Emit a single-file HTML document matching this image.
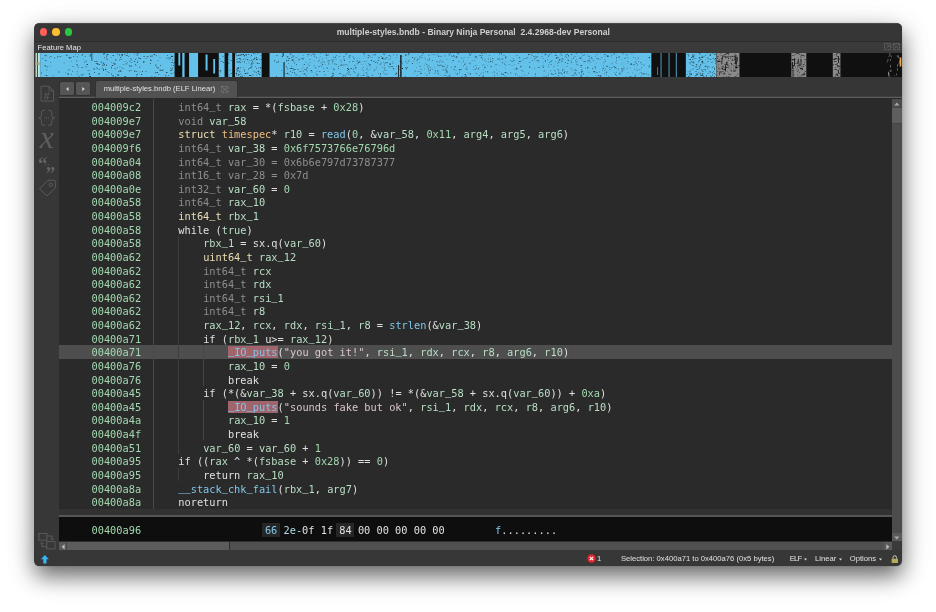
<!DOCTYPE html>
<html><head><meta charset="utf-8"><title>multiple-styles.bndb - Binary Ninja Personal</title>
<style>
html,body{margin:0;padding:0;background:#fff;}
body{width:936px;height:612px;overflow:hidden;position:relative;font-family:"Liberation Sans",sans-serif;}
.win{position:absolute;left:34px;top:23px;width:868px;height:543.2px;border-radius:5.5px;background:#373737;overflow:hidden;will-change:transform;}
.in{position:absolute;left:0.5px;top:0;width:867px;height:100%}
.shadow{position:absolute;left:34.5px;top:23px;width:867px;height:543.2px;border-radius:6px;
 box-shadow:0 0 1px rgba(0,0,0,.5),0 10px 22px rgba(0,0,0,.58),0 6px 40px rgba(0,0,0,.07);}
.titlebar{position:absolute;left:0;top:0;width:100%;height:19px;background:#363637;border-bottom:1px solid #2c2c2c;box-shadow:inset 0 1px 0 rgba(255,255,255,.1);box-sizing:border-box}
.tl{position:absolute;top:5.3px;width:7.6px;height:7.6px;border-radius:50%}
.title{position:absolute;left:302.2px;top:3.6px;font-weight:bold;font-size:8.55px;line-height:11px;color:#cfcfcf;white-space:pre}
.fmlabel{position:absolute;left:0;top:19px;width:100%;height:11px;background:#3a3a3a}
.fmlabel span{position:absolute;left:3.1px;top:0.2px;font-size:7.65px;line-height:11px;color:#e6e6e6}
.fm{position:absolute;left:0;top:29.6px;display:block}
.side{position:absolute;left:0;top:54.3px;width:24.2px;bottom:0;background:#373737}
.tabbar{position:absolute;left:24.2px;top:54px;right:0;height:22px;background:#363636;border-bottom:1px solid #272727;box-shadow:inset 0 -1px 0 #5e5e5e, inset 0 -2px 0 #404040;box-sizing:border-box}
.nav{position:absolute;top:5px;width:13.6px;height:13.4px;background:#565656;border-radius:1.5px;box-shadow:0 0 0 0.5px #2c2c2c}
.tab{position:absolute;left:37.3px;top:4px;width:141.4px;height:17px;background:#525252;border-radius:2px 2px 0 0;box-shadow:0 0 0 0.5px #2e2e2e}
.tab span{position:absolute;left:7.7px;top:3.4px;font-size:7.62px;line-height:10px;color:#e2e2e2;white-space:pre}
.code{position:absolute;left:24.2px;top:76px;width:833.3px;height:410px;background:#2a2a2a;overflow:hidden;
 font-family:"DejaVu Sans Mono","Liberation Mono",monospace;font-size:10.3px;line-height:13.63px;color:#e0e0e0}
.row{position:absolute;left:0;width:100%;height:13.63px;white-space:pre}
.hlrow{position:absolute;left:0;width:100%;height:13.63px;background:#4e4e4e}
.row i{font-style:normal;font-family:"Liberation Mono",monospace;font-size:10.33px;line-height:1px}
.addr{position:absolute;left:32.8px;top:1.4px;color:#a2d9af}
.tx{position:absolute;top:1.4px}
.d{color:#8e8e8e} .v{color:#b9dfc5} .n{color:#a2d9af} .y{color:#eddfb3} .o{color:#edbd81} .b{color:#80c6e9} .s{color:#dac4d1}
.hb{color:#80c6e9;background:#a0646c}
.vl{position:absolute;width:0.9px;background:#454545}
.sep{position:absolute;left:24.2px;top:486px;width:842.8px;height:8px;background:#323232;border-bottom:2px solid #565656;box-sizing:border-box}
.hex{position:absolute;left:24.2px;top:494px;width:833.3px;height:24px;background:#0e0e0e;font-family:"DejaVu Sans Mono","Liberation Mono",monospace;font-size:10.3px;line-height:13.63px;color:#e0e0e0;white-space:pre}
.hex span{position:absolute;top:6.7px}
.hexbox{position:absolute;top:5.6px;height:14.4px;background:#262626}
.vsb{position:absolute;left:857.5px;top:76px;width:9.5px;height:442px;background:#4c4c4c}
.vsb .thumb{position:absolute;left:0;top:8px;width:9.5px;height:17px;background:#5e5e5e;border-top:1px solid #454545;border-bottom:1px solid #454545;box-sizing:border-box}
.hsb{position:absolute;left:24.2px;top:518px;width:833.3px;height:9px;background:#505050;border-top:1px solid #2e2e2e;box-sizing:border-box}
.hsb .thumb{position:absolute;left:0;top:0;width:170.6px;height:8px;background:#5c5c5c;border-right:1px solid #2e2e2e}
.sbtn{position:absolute;background:#5a5a5a;box-sizing:border-box}
.corner{position:absolute;left:857.5px;top:518px;width:9.5px;height:9px;background:#3a3a3a}
.status{position:absolute;left:0;top:527px;width:100%;height:16px;font-size:7.65px;line-height:16px;color:#e0e0e0}
.status span{position:absolute;top:1.1px;white-space:pre}
svg{position:absolute;overflow:visible}
</style></head>
<body>
<div class="shadow"></div>
<div class="win"><div class="in">
 <div class="titlebar">
  <div class="tl" style="left:5.4px;background:#fe5f57"></div>
  <div class="tl" style="left:17.8px;background:#febc2e"></div>
  <div class="tl" style="left:30.2px;background:#28c840"></div>
  <div class="title">multiple-styles.bndb - Binary Ninja Personal  2.4.2968-dev Personal</div>
 </div>
 <div class="fmlabel"><span>Feature Map</span>
  <svg style="left:849.4px;top:0.8px" width="17" height="8" viewBox="0 0 17 8" fill="none" stroke="#7d7a73" stroke-width="0.7" stroke-dasharray="1.6 0.7">
   <rect x="0.4" y="0.6" width="6.4" height="6.2"/><path d="M2 5.4 L5.2 2.2 M3.2 2.2h2v2" />
   <rect x="9.2" y="0.6" width="6.4" height="6.2"/><path d="M9.6 1 L15.2 6.4 M15.2 1 L9.6 6.4"/>
  </svg>
 </div>
 <svg class="fm" width="867" height="24.6" viewBox="0 0 867 24.6">
<rect width="867" height="24.6" fill="#101010"/>
<rect x="5.0" y="0" width="611.4" height="24.6" fill="#64c1e9"/>
<rect x="650.9" y="0" width="30.4" height="24.6" fill="#64c1e9"/>
<rect x="0.3" y="0" width="1.6" height="24.6" fill="#b8d8c8"/>
<rect x="2.6" y="0" width="2.2" height="24.6" fill="#c9e6e0"/>
<rect x="0" y="9" width="5" height="3" fill="#b0a070" opacity="0.7"/>
<rect x="139.5" y="0" width="7.7" height="24.5" fill="#101010"/>
<rect x="149.5" y="0" width="4.5" height="24.5" fill="#101010"/>
<rect x="163.0" y="0" width="20.7" height="24.5" fill="#101010"/>
<rect x="189.5" y="0" width="3.6" height="24.5" fill="#101010"/>
<rect x="197.2" y="0" width="2.7" height="24.5" fill="#101010"/>
<rect x="226.6" y="0" width="7.9" height="24.5" fill="#101010"/>
<rect x="248.5" y="9" width="1.0" height="15.600000000000001" fill="#101010"/>
<rect x="247.7" y="0" width="0.8" height="3" fill="#101010"/>
<rect x="365.2" y="2" width="1.3" height="22.5" fill="#101010"/>
<rect x="363.0" y="12" width="0.8" height="12.5" fill="#101010"/>
<rect x="56.5" y="0" width="0.6" height="8" fill="#101010"/>
<rect x="143.3" y="0" width="1.9" height="12.5" fill="#64c1e9"/>
<rect x="170.5" y="1.5" width="2.0" height="16.0" fill="#64c1e9"/>
<rect x="178.2" y="6" width="1.8" height="14.5" fill="#64c1e9"/>
<rect x="625.7" y="0" width="0.8" height="24.5" fill="#64c1e9"/>
<rect x="633.7" y="0" width="0.8" height="24.5" fill="#64c1e9"/>
<rect x="640.9" y="0" width="0.8" height="24.5" fill="#64c1e9"/>
<rect x="622.5" y="14" width="0.6" height="8" fill="#64c1e9"/>
<path d="M24.6 3.6h1.4v0.5h-1.4zM9.8 12.6h0.8v1.0h-0.8zM8.9 12.0h0.5v0.5h-0.5zM31.1 1.6h0.5v1.0h-0.5zM30.5 19.5h0.5v0.6h-0.5zM42.7 13.8h0.5v1.0h-0.5zM40.0 1.2h0.6v0.5h-0.6zM38.3 3.1h0.8v0.6h-0.8zM37.4 13.5h1.0v0.6h-1.0zM11.6 13.5h0.6v0.8h-0.6zM11.2 16.8h1.0v0.5h-1.0zM42.0 11.7h1.0v0.8h-1.0zM51.4 11.0h0.8v0.8h-0.8zM23.2 18.7h1.4v0.6h-1.4zM10.3 7.1h0.8v0.8h-0.8zM48.5 6.8h0.5v0.5h-0.5zM35.7 3.9h0.8v0.6h-0.8zM60.6 10.0h1.4v0.5h-1.4zM50.6 13.5h0.8v0.8h-0.8zM46.5 14.0h1.0v0.8h-1.0zM9.6 2.2h0.8v0.8h-0.8zM46.6 1.5h1.4v0.8h-1.4zM43.7 23.4h0.8v0.8h-0.8zM47.8 20.9h0.8v0.5h-0.8zM61.0 8.4h1.0v0.5h-1.0zM34.6 5.1h0.8v0.6h-0.8zM49.1 9.4h0.8v0.5h-0.8zM15.3 9.5h0.8v0.6h-0.8zM53.8 20.4h0.8v0.8h-0.8zM63.7 16.1h0.8v0.6h-0.8zM14.4 4.2h0.6v0.6h-0.6zM6.2 19.6h0.6v0.8h-0.6zM22.1 3.4h1.0v0.8h-1.0zM41.5 7.5h0.6v1.0h-0.6zM61.6 15.5h1.4v0.5h-1.4zM32.4 20.6h1.4v1.0h-1.4zM28.7 9.4h0.5v0.8h-0.5zM42.9 1.5h0.5v0.6h-0.5zM31.5 2.6h1.0v0.5h-1.0zM11.5 13.4h1.0v0.5h-1.0zM61.5 14.5h0.5v0.6h-0.5zM41.7 3.5h0.8v0.8h-0.8zM41.0 11.2h0.5v0.8h-0.5zM64.1 11.0h0.8v0.8h-0.8zM10.6 2.4h0.8v0.8h-0.8zM33.7 16.3h1.0v0.5h-1.0zM17.6 22.5h0.8v0.6h-0.8zM46.2 21.6h1.0v0.8h-1.0zM63.2 20.4h1.4v0.8h-1.4zM36.1 21.4h0.8v0.6h-0.8zM36.9 18.4h0.8v0.6h-0.8zM41.7 18.6h0.6v0.6h-0.6zM53.8 17.5h0.6v0.6h-0.6zM36.0 8.4h0.5v0.5h-0.5zM52.1 11.1h0.6v1.0h-0.6zM61.9 10.6h1.4v0.8h-1.4zM61.8 8.6h0.6v0.5h-0.6zM18.9 4.6h0.6v0.8h-0.6zM42.3 21.2h0.5v0.8h-0.5zM59.1 8.1h1.4v0.5h-1.4zM54.7 2.8h0.8v0.6h-0.8zM33.7 4.2h1.4v0.8h-1.4zM10.6 22.3h1.4v0.8h-1.4zM32.8 17.5h0.5v0.6h-0.5zM15.5 3.0h0.6v1.0h-0.6zM58.9 19.0h0.6v1.0h-0.6zM54.3 23.1h1.4v0.8h-1.4zM14.7 12.9h0.5v0.5h-0.5zM52.7 17.1h0.5v1.0h-0.5zM49.7 3.3h0.6v0.6h-0.6zM7.2 5.0h1.0v0.6h-1.0zM50.6 7.7h1.0v0.8h-1.0zM54.7 1.4h1.4v0.8h-1.4zM58.5 15.6h1.0v0.8h-1.0zM54.3 20.7h0.6v1.0h-0.6z" fill="#0a0a0a" opacity="0.9"/>
<path d="M76.7 12.0h0.8v0.6h-0.8zM110.5 18.3h0.6v0.6h-0.6zM76.0 14.6h0.5v1.0h-0.5zM70.1 16.1h1.0v1.0h-1.0zM101.2 18.3h1.0v0.5h-1.0zM83.9 6.5h0.5v1.0h-0.5zM99.0 0.7h0.5v0.8h-0.5zM89.6 23.0h1.0v1.0h-1.0zM80.3 6.5h1.0v1.0h-1.0zM125.2 12.0h0.6v1.0h-0.6zM130.4 22.2h0.8v1.0h-0.8zM131.6 4.8h0.8v0.6h-0.8zM96.3 9.3h0.8v0.5h-0.8zM115.2 10.1h0.6v0.8h-0.6zM123.5 21.2h0.6v0.8h-0.6zM76.1 20.8h0.8v0.6h-0.8zM120.8 2.2h0.8v0.6h-0.8zM138.8 19.6h0.6v0.8h-0.6zM139.1 9.5h0.8v0.6h-0.8zM91.9 2.2h0.8v0.5h-0.8zM90.5 10.8h1.4v0.5h-1.4zM93.9 12.2h0.8v1.0h-0.8zM136.6 2.7h0.6v0.5h-0.6zM71.7 6.4h0.6v0.8h-0.6zM121.4 19.3h1.4v0.8h-1.4zM95.5 12.7h1.0v1.0h-1.0zM102.1 7.7h0.8v0.5h-0.8zM124.7 4.3h0.5v0.8h-0.5zM134.9 15.0h0.8v0.5h-0.8zM110.5 5.2h0.8v0.5h-0.8zM99.1 8.0h1.0v0.8h-1.0zM134.1 6.3h0.6v0.5h-0.6zM104.5 5.6h0.5v0.6h-0.5zM84.9 4.3h0.8v0.8h-0.8zM104.8 4.9h0.8v1.0h-0.8zM115.2 6.4h0.5v0.8h-0.5zM68.2 0.4h1.0v1.0h-1.0zM137.9 12.1h0.6v0.8h-0.6zM73.4 19.3h0.8v0.8h-0.8zM105.9 21.0h1.0v0.8h-1.0zM116.4 23.2h0.8v0.6h-0.8zM127.1 16.7h1.4v0.6h-1.4zM95.4 8.2h0.5v0.6h-0.5zM66.6 14.8h0.8v0.8h-0.8zM77.6 2.0h0.8v1.0h-0.8zM115.1 6.7h0.6v0.8h-0.6zM68.8 4.4h0.8v0.8h-0.8zM65.8 8.6h0.8v1.0h-0.8zM89.4 0.8h0.8v0.6h-0.8zM91.9 0.0h0.8v0.5h-0.8zM100.6 11.9h0.6v0.6h-0.6zM102.9 0.1h0.8v0.5h-0.8zM76.1 13.8h0.8v0.5h-0.8zM87.7 14.9h0.5v1.0h-0.5zM136.4 20.1h0.6v1.0h-0.6zM94.3 7.7h0.8v0.6h-0.8zM86.5 14.6h0.6v0.5h-0.6zM126.5 16.9h1.0v0.8h-1.0zM119.8 19.2h0.6v1.0h-0.6zM121.2 13.4h0.5v1.0h-0.5zM124.5 16.8h1.4v0.6h-1.4zM71.8 1.0h1.4v0.8h-1.4zM136.5 8.9h0.8v1.0h-0.8zM69.3 0.4h1.0v0.6h-1.0zM101.7 0.1h0.5v1.0h-0.5zM131.9 2.2h1.0v0.5h-1.0zM120.7 11.2h0.5v0.8h-0.5zM82.9 17.9h0.6v0.8h-0.6zM102.1 9.0h0.8v0.8h-0.8zM122.3 14.6h1.4v0.6h-1.4zM71.2 3.5h0.8v0.8h-0.8zM111.5 3.1h0.8v0.5h-0.8zM101.4 23.0h0.5v0.6h-0.5zM115.5 6.9h1.0v0.8h-1.0zM99.9 11.0h0.5v1.0h-0.5zM80.2 23.1h0.8v0.5h-0.8zM86.9 1.8h1.0v0.8h-1.0zM139.1 9.1h0.6v0.5h-0.6zM108.5 3.3h1.0v0.8h-1.0zM136.0 3.1h1.4v1.0h-1.4zM86.2 2.7h0.8v0.6h-0.8zM102.3 20.7h0.8v0.5h-0.8zM77.3 22.4h1.4v0.8h-1.4zM95.5 17.2h0.8v0.8h-0.8zM93.3 2.9h0.8v0.5h-0.8zM89.5 8.0h0.8v0.5h-0.8zM135.1 4.6h0.5v0.8h-0.5zM84.2 1.5h0.8v1.0h-0.8zM71.2 21.8h0.8v0.5h-0.8zM86.3 1.2h1.4v0.8h-1.4zM112.5 3.5h0.8v0.8h-0.8zM103.3 4.5h0.8v0.8h-0.8zM130.9 19.2h1.4v0.8h-1.4zM133.1 22.2h1.0v0.6h-1.0zM118.7 1.2h1.4v0.8h-1.4zM98.9 17.8h1.4v0.8h-1.4zM101.4 21.5h1.0v0.6h-1.0zM78.1 9.8h0.8v0.8h-0.8zM84.4 17.4h1.4v0.8h-1.4zM95.6 5.6h0.8v1.0h-0.8zM115.0 2.8h1.4v0.6h-1.4zM71.1 11.8h0.8v1.0h-0.8zM81.8 21.4h0.8v0.8h-0.8zM75.8 4.5h0.5v0.6h-0.5zM90.8 2.1h0.6v0.8h-0.6zM84.6 13.4h0.5v0.8h-0.5zM93.8 17.6h0.6v0.8h-0.6zM85.5 17.7h0.8v0.8h-0.8zM108.0 8.5h1.4v1.0h-1.4zM104.7 18.7h0.6v0.5h-0.6zM85.6 5.9h0.8v0.8h-0.8zM97.5 7.4h0.5v0.6h-0.5zM67.9 16.7h0.8v1.0h-0.8zM101.7 1.7h1.0v0.8h-1.0zM137.4 5.9h0.5v0.6h-0.5zM76.9 12.3h1.4v0.5h-1.4zM135.2 17.0h1.4v0.8h-1.4zM71.8 18.3h0.5v0.6h-0.5zM82.7 21.7h1.4v0.8h-1.4zM136.7 14.8h1.0v0.8h-1.0zM117.2 2.6h0.5v0.8h-0.5zM104.3 13.8h0.8v0.8h-0.8zM82.0 14.2h0.5v1.0h-0.5zM87.8 10.9h0.8v0.6h-0.8zM100.7 5.5h0.6v0.5h-0.6zM136.6 16.6h0.8v0.5h-0.8zM67.1 11.8h1.4v0.8h-1.4zM71.5 5.4h0.8v0.8h-0.8zM82.3 0.8h0.8v0.8h-0.8zM92.3 9.4h0.5v0.8h-0.5zM120.2 11.9h0.6v0.8h-0.6zM137.3 7.4h0.6v0.6h-0.6zM99.9 6.3h0.8v0.5h-0.8zM135.9 11.7h0.6v0.6h-0.6zM101.4 21.5h0.5v1.0h-0.5zM76.3 9.3h0.6v0.5h-0.6zM137.6 3.3h0.5v0.5h-0.5zM79.1 10.6h1.4v0.8h-1.4zM119.7 23.5h0.6v0.8h-0.6zM79.6 15.4h1.0v0.8h-1.0zM67.9 15.7h0.8v0.8h-0.8zM138.4 10.4h0.5v0.5h-0.5zM71.3 1.9h0.8v0.5h-0.8zM107.0 17.9h0.8v0.8h-0.8zM122.4 7.3h0.8v0.5h-0.8zM69.1 11.2h0.8v1.0h-0.8zM133.5 4.6h0.8v0.8h-0.8zM67.7 9.7h1.4v0.8h-1.4zM68.5 0.8h0.5v0.5h-0.5zM84.5 17.6h1.0v0.8h-1.0z" fill="#0a0a0a" opacity="0.9"/>
<path d="M185.4 7.9h1.0v0.5h-1.0zM185.0 16.9h0.8v0.8h-0.8zM185.1 17.0h1.0v0.5h-1.0zM183.8 5.5h0.8v0.8h-0.8zM188.3 9.1h0.8v0.8h-0.8zM187.6 3.1h0.8v0.6h-0.8zM183.7 22.0h0.8v0.6h-0.8zM186.6 7.7h0.8v0.8h-0.8zM185.4 18.5h0.5v1.0h-0.5zM184.6 17.8h0.6v0.8h-0.6z" fill="#0a0a0a" opacity="0.8"/>
<path d="M192.8 0.8h1.0v1.0h-1.0zM193.8 23.1h0.5v0.5h-0.5zM193.6 2.0h0.5v0.8h-0.5zM194.5 16.8h0.8v0.6h-0.8zM193.4 9.8h1.0v0.6h-1.0zM195.5 20.0h1.4v0.5h-1.4zM195.6 6.9h0.8v1.0h-0.8zM193.6 6.0h0.8v0.6h-0.8zM194.3 4.4h0.6v0.6h-0.6zM193.6 21.4h0.6v0.8h-0.6z" fill="#0a0a0a" opacity="0.8"/>
<path d="M201.6 5.9h0.6v1.0h-0.6zM213.4 15.3h0.5v0.8h-0.5zM225.4 2.4h0.8v0.6h-0.8zM221.5 21.6h0.5v0.8h-0.5zM205.9 1.2h1.0v1.0h-1.0zM204.9 1.8h1.0v0.6h-1.0zM211.4 6.1h1.4v0.5h-1.4zM202.6 14.1h1.0v0.8h-1.0zM205.5 8.7h0.6v0.5h-0.6zM205.1 6.0h1.0v0.6h-1.0zM220.8 19.3h0.8v0.8h-0.8zM204.7 7.4h0.6v0.5h-0.6zM220.3 12.9h0.5v0.8h-0.5zM202.5 9.3h1.0v0.6h-1.0zM216.3 2.2h0.6v0.8h-0.6zM217.8 9.7h0.8v0.8h-0.8zM210.6 1.2h1.4v1.0h-1.4zM222.6 9.8h0.5v0.8h-0.5zM216.5 9.2h0.8v0.6h-0.8zM224.1 10.2h0.6v0.8h-0.6zM202.8 2.1h1.0v0.8h-1.0zM211.7 3.8h0.5v0.5h-0.5zM214.1 15.1h0.8v0.5h-0.8zM214.6 21.9h1.4v1.0h-1.4zM204.3 8.2h0.6v1.0h-0.6zM204.3 1.6h0.8v0.8h-0.8zM219.3 18.7h0.6v0.8h-0.6zM203.2 22.3h0.8v0.8h-0.8zM201.3 21.9h0.8v0.5h-0.8zM223.1 14.6h0.6v0.6h-0.6zM215.9 14.5h0.6v0.8h-0.6zM204.6 5.1h0.8v1.0h-0.8zM203.9 8.5h0.6v0.6h-0.6zM224.8 19.2h0.6v0.5h-0.6zM222.6 19.9h1.4v0.5h-1.4zM217.1 7.7h0.8v1.0h-0.8zM211.6 20.0h0.8v0.8h-0.8zM207.8 5.9h0.8v0.8h-0.8zM211.4 10.3h0.5v0.5h-0.5zM215.8 11.6h0.6v0.8h-0.6zM219.5 18.4h0.8v0.6h-0.8zM220.7 9.4h0.5v0.6h-0.5zM209.1 8.6h0.8v1.0h-0.8zM213.0 1.0h1.4v0.6h-1.4zM202.0 17.3h1.4v1.0h-1.4zM202.0 17.7h0.8v0.6h-0.8zM200.6 1.6h1.0v0.5h-1.0zM204.9 23.2h0.8v0.8h-0.8zM224.5 21.6h0.6v0.6h-0.6zM201.6 8.3h0.8v0.6h-0.8zM208.2 14.5h0.8v0.6h-0.8zM206.4 22.8h0.8v0.6h-0.8zM215.1 14.5h0.6v0.8h-0.6zM209.5 4.7h0.8v0.6h-0.8zM216.3 6.6h0.8v0.8h-0.8zM204.2 18.5h0.5v1.0h-0.5zM201.1 20.3h0.8v1.0h-0.8zM213.3 16.3h0.5v0.8h-0.5zM225.4 14.9h0.8v0.8h-0.8zM206.7 23.4h1.0v0.6h-1.0zM209.2 18.0h0.8v0.6h-0.8zM204.4 17.5h0.5v0.8h-0.5zM221.0 6.0h1.4v1.0h-1.4zM223.8 21.1h1.4v0.5h-1.4zM219.1 5.2h0.8v1.0h-0.8zM216.0 9.9h0.8v0.5h-0.8zM203.3 5.4h1.4v0.5h-1.4zM200.5 0.1h0.8v0.8h-0.8zM202.6 8.4h0.6v0.8h-0.6zM214.9 13.9h0.6v0.8h-0.6zM215.9 11.2h0.6v0.5h-0.6zM224.0 5.7h0.6v0.8h-0.6zM202.4 15.1h1.4v0.8h-1.4zM210.2 6.2h0.5v0.5h-0.5zM216.5 13.3h0.8v1.0h-0.8zM216.5 10.5h1.0v0.8h-1.0zM206.3 21.3h0.5v0.5h-0.5zM213.6 9.6h0.6v0.6h-0.6zM201.4 18.4h0.5v1.0h-0.5zM214.1 22.2h0.6v0.8h-0.6zM205.0 14.4h1.0v0.8h-1.0zM220.8 4.1h0.8v0.5h-0.8zM207.6 1.1h1.4v0.8h-1.4zM218.3 0.1h0.8v0.8h-0.8zM202.0 15.5h0.6v0.6h-0.6zM225.5 6.2h1.4v0.5h-1.4zM203.1 21.0h1.4v0.8h-1.4zM218.2 6.3h1.0v0.8h-1.0zM217.5 21.6h0.8v0.8h-0.8zM216.4 22.8h0.6v0.5h-0.6zM222.5 0.4h0.8v0.6h-0.8zM221.5 4.8h0.6v0.8h-0.6zM204.8 9.2h1.0v0.6h-1.0zM209.7 20.1h1.4v1.0h-1.4zM212.0 19.8h1.4v0.5h-1.4zM221.9 10.3h1.4v0.6h-1.4zM214.6 7.3h0.6v0.8h-0.6zM215.9 1.8h0.6v0.6h-0.6zM200.7 2.6h1.0v0.6h-1.0zM208.8 3.3h0.5v0.5h-0.5zM201.0 16.3h1.4v0.5h-1.4zM217.8 17.4h0.5v1.0h-0.5zM219.5 4.7h1.0v0.5h-1.0zM222.5 17.8h1.4v0.8h-1.4zM202.7 4.9h0.5v0.5h-0.5zM200.8 20.0h1.4v0.5h-1.4zM221.1 14.9h0.8v0.8h-0.8zM202.5 2.3h1.4v0.6h-1.4zM207.5 7.9h0.8v0.5h-0.8zM208.9 22.0h0.5v0.8h-0.5zM223.3 18.2h1.0v1.0h-1.0zM212.1 6.8h1.4v0.5h-1.4zM220.2 0.7h1.0v0.5h-1.0zM208.8 16.6h1.0v1.0h-1.0zM205.5 20.3h0.5v1.0h-0.5zM221.0 4.0h0.5v1.0h-0.5zM205.1 18.0h0.5v0.5h-0.5zM208.8 2.3h1.4v0.6h-1.4zM224.8 14.0h1.0v0.8h-1.0zM214.8 3.7h0.6v0.6h-0.6z" fill="#0a0a0a" opacity="0.75"/>
<path d="M241.0 2.6h1.4v0.5h-1.4zM240.9 23.4h1.0v0.5h-1.0zM242.7 8.4h0.8v0.8h-0.8zM246.1 17.6h0.8v0.5h-0.8zM239.3 7.2h0.8v1.0h-0.8zM241.0 9.0h1.4v0.6h-1.4zM246.8 3.0h1.0v1.0h-1.0zM242.9 8.2h0.8v1.0h-0.8z" fill="#0a0a0a" opacity="0.8"/>
<path d="M251.8 19.9h1.4v1.0h-1.4zM260.6 4.0h0.8v0.8h-0.8zM258.2 3.0h0.8v0.6h-0.8zM257.1 6.3h1.4v1.0h-1.4zM251.8 3.7h0.6v0.8h-0.6zM258.5 8.2h0.6v0.8h-0.6zM263.8 6.1h1.4v0.5h-1.4zM252.0 15.5h0.6v0.8h-0.6zM251.8 3.5h0.8v0.8h-0.8zM256.0 4.6h1.4v0.5h-1.4zM253.7 20.9h0.8v0.5h-0.8zM249.7 20.2h0.8v0.6h-0.8zM257.0 14.9h0.8v0.5h-0.8zM251.6 14.2h0.8v0.5h-0.8zM260.6 21.4h0.8v1.0h-0.8zM258.3 15.3h0.6v1.0h-0.6zM262.3 16.0h1.4v0.5h-1.4zM256.3 7.4h1.4v0.5h-1.4zM262.9 5.7h0.8v0.6h-0.8zM253.3 10.0h0.8v0.5h-0.8zM258.8 9.7h1.4v0.6h-1.4zM262.9 7.7h0.5v0.8h-0.5zM262.0 21.4h0.5v0.5h-0.5zM253.3 5.1h1.4v0.6h-1.4zM257.3 2.4h1.0v0.8h-1.0zM257.6 16.9h1.0v0.5h-1.0zM259.1 19.6h1.0v0.8h-1.0zM255.7 22.4h0.6v0.6h-0.6zM255.4 18.0h0.5v1.0h-0.5zM254.8 1.3h0.8v0.8h-0.8zM255.5 0.3h0.8v0.8h-0.8zM258.9 15.9h1.0v0.8h-1.0zM251.1 7.2h0.8v1.0h-0.8zM264.1 23.5h0.8v0.8h-0.8zM252.7 3.1h0.5v0.6h-0.5zM256.5 13.3h0.6v0.6h-0.6zM254.8 15.1h0.8v0.8h-0.8zM264.4 17.9h1.4v0.6h-1.4zM261.2 11.1h0.6v0.8h-0.6zM260.1 16.2h0.8v0.6h-0.8zM256.7 19.0h0.8v0.8h-0.8zM253.2 7.1h0.8v0.8h-0.8zM255.9 15.0h1.4v0.8h-1.4zM251.8 7.2h0.8v0.5h-0.8zM250.8 13.3h0.8v0.6h-0.8z" fill="#0a0a0a" opacity="0.75"/>
<path d="M450.7 8.1h1.0v0.5h-1.0zM494.9 5.0h0.5v0.8h-0.5zM352.8 2.4h0.6v0.6h-0.6zM330.3 10.7h0.6v0.6h-0.6zM581.0 18.7h0.6v1.0h-0.6zM576.5 14.4h0.5v1.0h-0.5zM540.5 19.8h0.6v0.8h-0.6zM507.3 12.5h1.4v0.8h-1.4zM499.8 2.8h0.5v0.8h-0.5zM411.7 19.5h0.8v0.8h-0.8zM460.0 11.4h0.6v0.8h-0.6zM351.6 3.9h1.0v0.5h-1.0zM321.5 7.6h1.4v1.0h-1.4zM439.2 7.0h0.8v0.8h-0.8zM414.1 23.6h1.4v0.5h-1.4zM328.5 8.5h1.4v0.5h-1.4zM272.7 1.1h1.4v0.8h-1.4zM547.7 2.2h0.8v0.8h-0.8zM529.8 3.4h0.6v0.8h-0.6zM483.7 8.0h1.4v0.8h-1.4zM384.6 18.4h1.0v0.6h-1.0zM364.7 8.1h0.8v1.0h-0.8zM283.9 6.8h0.8v0.8h-0.8zM406.4 11.9h0.8v1.0h-0.8zM385.8 4.8h0.8v0.5h-0.8zM381.0 7.5h0.8v0.6h-0.8zM470.2 15.0h0.5v0.8h-0.5zM517.7 20.9h1.0v1.0h-1.0zM282.8 7.1h0.5v0.5h-0.5zM331.8 21.7h1.0v0.5h-1.0zM540.9 21.5h1.0v0.8h-1.0zM480.7 14.8h1.4v1.0h-1.4zM571.3 2.0h0.5v0.8h-0.5zM483.7 4.1h1.4v0.6h-1.4zM568.9 9.9h0.5v0.5h-0.5zM394.2 19.4h0.8v1.0h-0.8zM513.3 20.4h0.6v0.8h-0.6zM277.5 0.5h1.0v1.0h-1.0zM591.4 1.3h1.0v1.0h-1.0zM279.2 2.8h0.8v1.0h-0.8zM508.3 9.5h0.5v0.5h-0.5zM502.8 14.0h1.4v0.6h-1.4zM431.4 9.7h0.5v0.5h-0.5zM490.4 5.0h0.6v0.5h-0.6zM414.5 0.2h1.4v0.5h-1.4zM609.8 20.3h0.6v0.5h-0.6zM310.5 0.4h1.4v1.0h-1.4zM350.1 17.3h0.6v0.5h-0.6zM393.2 17.6h1.4v0.6h-1.4zM520.2 2.0h1.4v1.0h-1.4zM513.0 10.9h0.8v0.5h-0.8zM515.8 0.3h0.5v1.0h-0.5zM293.3 7.3h1.4v1.0h-1.4zM323.4 20.3h0.8v1.0h-0.8zM286.4 8.7h1.0v0.8h-1.0zM429.5 3.9h0.5v0.8h-0.5zM598.4 3.9h0.8v0.8h-0.8zM400.1 18.6h0.8v1.0h-0.8zM382.0 6.6h1.0v1.0h-1.0zM381.4 14.3h0.5v0.6h-0.5zM475.3 7.3h0.8v0.6h-0.8zM397.0 16.2h1.0v0.6h-1.0zM547.3 6.7h0.5v0.8h-0.5zM357.3 10.0h1.0v0.5h-1.0zM366.2 3.3h1.0v0.6h-1.0zM361.1 20.1h1.0v0.8h-1.0zM386.6 2.0h1.0v0.8h-1.0zM543.8 4.7h1.4v0.6h-1.4zM373.5 1.4h0.8v0.8h-0.8zM512.7 21.9h1.0v0.5h-1.0zM541.8 10.8h0.5v1.0h-0.5zM547.0 18.2h0.6v0.8h-0.6zM467.8 21.2h1.0v0.8h-1.0zM431.8 13.9h0.6v0.6h-0.6zM332.6 4.3h1.4v0.8h-1.4zM392.1 13.3h0.8v1.0h-0.8zM564.6 5.8h0.8v0.8h-0.8zM567.9 8.8h0.8v0.5h-0.8zM320.0 14.1h0.8v0.8h-0.8zM446.8 0.5h0.5v0.6h-0.5zM611.2 20.4h0.8v1.0h-0.8zM463.4 6.2h0.8v0.8h-0.8zM299.4 10.5h1.0v1.0h-1.0zM601.8 6.0h0.5v0.8h-0.5zM335.6 4.3h0.5v0.5h-0.5zM283.3 13.2h1.4v0.8h-1.4zM435.4 20.0h0.5v1.0h-0.5zM488.8 21.8h1.4v0.5h-1.4zM355.3 13.3h1.4v0.5h-1.4zM599.3 15.8h0.8v0.6h-0.8zM422.0 3.8h0.6v0.6h-0.6zM325.6 22.2h0.8v0.5h-0.8zM580.6 21.3h0.5v0.8h-0.5zM539.9 16.7h1.4v0.8h-1.4zM285.0 3.4h0.5v0.6h-0.5zM501.7 7.1h1.0v0.8h-1.0zM530.0 2.5h0.8v0.8h-0.8zM355.2 2.9h0.8v0.8h-0.8zM324.3 5.6h0.6v0.5h-0.6zM428.8 21.5h0.5v0.6h-0.5zM589.3 5.2h1.0v0.8h-1.0zM575.7 3.3h0.8v0.5h-0.8zM588.7 9.1h0.5v0.5h-0.5zM423.4 8.0h0.6v0.8h-0.6zM305.8 8.6h0.8v0.6h-0.8zM522.4 4.3h0.8v1.0h-0.8zM575.9 10.4h0.6v0.8h-0.6zM411.5 5.8h0.5v0.8h-0.5zM464.8 7.0h0.6v0.8h-0.6zM436.9 7.5h0.8v0.5h-0.8zM319.0 12.1h1.4v0.6h-1.4zM460.9 19.7h0.5v0.8h-0.5zM528.9 22.9h0.8v0.8h-0.8zM613.8 21.8h0.5v0.8h-0.5zM366.5 21.2h0.5v0.8h-0.5zM315.9 15.1h0.8v1.0h-0.8zM384.5 3.3h0.5v1.0h-0.5zM365.5 8.5h0.5v0.8h-0.5zM341.7 13.5h0.6v0.6h-0.6zM447.6 5.4h0.6v0.6h-0.6zM475.1 19.6h1.0v0.8h-1.0zM531.2 4.1h0.6v1.0h-0.6zM499.3 14.8h0.6v1.0h-0.6zM373.0 0.2h1.4v1.0h-1.4zM407.9 17.0h0.5v1.0h-0.5zM548.4 7.9h1.4v0.8h-1.4zM297.0 9.7h0.8v0.6h-0.8zM569.8 6.3h0.6v1.0h-0.6zM555.7 8.7h0.6v0.8h-0.6zM466.1 20.3h0.8v1.0h-0.8zM590.8 22.9h0.5v0.5h-0.5zM390.0 5.8h0.8v0.8h-0.8zM466.6 21.2h0.8v0.5h-0.8zM598.5 11.7h1.0v0.5h-1.0zM450.6 12.7h0.5v0.6h-0.5zM603.1 5.3h0.6v0.6h-0.6zM301.3 5.9h0.5v0.5h-0.5zM299.2 16.5h0.6v0.8h-0.6zM271.7 14.1h1.0v0.8h-1.0zM448.0 16.6h0.5v0.8h-0.5zM569.0 16.9h0.5v0.8h-0.5zM308.4 11.6h1.0v0.8h-1.0zM303.9 2.9h0.6v1.0h-0.6zM472.0 20.3h0.6v1.0h-0.6zM426.8 9.4h0.5v0.8h-0.5zM507.7 14.1h1.0v1.0h-1.0zM278.1 22.9h0.5v0.8h-0.5zM383.7 5.7h0.8v0.8h-0.8zM559.7 13.3h0.8v0.8h-0.8zM561.3 1.3h1.0v0.6h-1.0zM599.8 22.1h0.6v0.8h-0.6zM496.9 0.3h0.5v1.0h-0.5zM330.9 7.7h0.6v1.0h-0.6zM499.0 5.3h0.8v0.8h-0.8zM536.5 22.1h1.4v0.5h-1.4zM547.9 20.9h0.5v0.5h-0.5zM567.6 14.7h1.4v1.0h-1.4zM360.9 12.8h0.5v1.0h-0.5zM300.6 2.9h0.5v0.8h-0.5zM348.1 0.9h0.5v0.8h-0.5zM386.8 3.9h0.5v1.0h-0.5zM600.2 21.7h0.8v0.5h-0.8zM428.3 12.6h0.6v0.8h-0.6zM308.7 3.1h0.8v0.8h-0.8zM467.0 6.5h1.4v0.5h-1.4zM523.9 6.8h0.8v1.0h-0.8zM508.0 5.2h0.8v0.6h-0.8zM457.0 8.7h1.0v0.8h-1.0zM479.4 11.1h0.8v0.5h-0.8zM350.0 5.2h1.0v1.0h-1.0zM399.2 13.8h0.5v0.8h-0.5zM322.1 22.5h0.8v1.0h-0.8zM379.1 6.4h0.6v0.8h-0.6zM285.4 0.5h1.0v0.5h-1.0zM477.0 8.2h1.4v0.5h-1.4zM445.9 19.7h0.8v0.5h-0.8zM447.3 23.3h1.4v0.6h-1.4zM410.9 15.8h0.6v0.6h-0.6zM480.6 20.1h1.0v0.5h-1.0zM523.3 17.5h0.8v0.8h-0.8zM539.4 16.7h1.4v0.6h-1.4zM409.6 2.4h0.8v1.0h-0.8zM470.0 11.8h1.0v0.6h-1.0zM411.4 18.5h1.0v1.0h-1.0zM304.2 20.1h1.4v0.8h-1.4zM366.0 8.3h0.8v0.8h-0.8zM449.1 14.1h1.4v0.8h-1.4zM267.9 17.6h0.8v0.8h-0.8zM420.5 4.3h0.8v0.6h-0.8zM417.5 8.9h0.6v0.5h-0.6zM552.3 7.8h1.0v0.6h-1.0zM600.1 4.8h0.8v0.5h-0.8zM274.4 6.1h0.8v0.8h-0.8zM586.7 18.3h1.0v1.0h-1.0zM613.9 12.2h1.0v0.8h-1.0zM401.4 8.4h1.0v0.8h-1.0zM423.6 0.2h0.5v1.0h-0.5zM345.5 9.7h1.0v0.8h-1.0zM491.8 21.9h0.6v0.6h-0.6zM602.1 11.5h0.8v1.0h-0.8zM579.3 13.9h1.4v1.0h-1.4zM526.0 2.2h0.8v0.8h-0.8zM393.5 1.8h0.8v1.0h-0.8zM326.8 15.5h0.8v0.8h-0.8zM551.9 23.4h0.8v0.6h-0.8zM448.4 19.3h0.6v1.0h-0.6zM577.2 9.7h0.5v1.0h-0.5zM476.0 8.3h1.4v0.5h-1.4zM506.9 0.3h0.5v0.8h-0.5zM513.5 13.0h0.8v0.8h-0.8zM559.4 13.8h1.4v0.5h-1.4zM334.1 11.7h1.0v1.0h-1.0zM358.3 15.3h1.0v1.0h-1.0zM613.5 13.6h0.8v1.0h-0.8zM307.9 3.7h1.0v0.5h-1.0zM275.6 1.8h1.0v0.8h-1.0zM552.8 14.5h0.5v0.5h-0.5zM504.4 13.7h0.6v0.6h-0.6zM389.0 4.0h0.8v0.5h-0.8zM565.4 22.4h0.5v0.8h-0.5zM332.4 14.7h0.5v0.5h-0.5zM342.3 9.3h0.5v0.8h-0.5zM284.5 5.6h0.6v0.5h-0.6zM321.1 13.9h0.6v0.8h-0.6zM267.7 20.5h0.8v0.8h-0.8zM411.5 5.9h0.8v0.5h-0.8zM350.3 9.2h1.4v1.0h-1.4zM342.8 7.3h1.4v0.8h-1.4zM273.3 20.5h0.5v0.6h-0.5zM324.8 8.9h0.5v0.8h-0.5zM403.7 8.6h0.8v1.0h-0.8zM569.6 7.9h1.4v0.5h-1.4zM601.0 10.0h0.8v1.0h-0.8zM351.0 4.5h0.8v0.8h-0.8zM348.3 0.8h1.4v0.5h-1.4zM384.7 3.7h1.4v0.6h-1.4zM297.8 6.4h0.6v1.0h-0.6zM420.2 19.7h0.6v0.6h-0.6zM393.9 5.1h0.8v0.8h-0.8zM485.1 13.7h0.8v0.8h-0.8zM441.7 5.4h0.8v0.6h-0.8zM594.3 23.6h1.0v0.8h-1.0zM470.6 8.7h0.6v0.8h-0.6zM477.8 5.0h0.5v1.0h-0.5zM297.4 20.1h1.4v0.8h-1.4zM275.5 17.0h0.6v0.8h-0.6zM270.7 16.8h1.4v0.6h-1.4zM536.4 5.5h0.6v0.5h-0.6zM289.3 21.6h1.0v0.8h-1.0zM332.8 17.0h0.5v0.6h-0.5zM366.2 19.3h0.8v0.8h-0.8zM389.7 19.9h0.8v0.6h-0.8zM592.4 4.2h0.8v0.8h-0.8zM578.5 0.6h1.4v0.8h-1.4zM352.2 20.0h0.8v0.5h-0.8zM328.9 2.7h1.0v0.6h-1.0zM514.2 1.0h0.5v1.0h-0.5zM322.0 4.7h0.8v0.6h-0.8zM398.4 0.9h0.8v0.6h-0.8zM462.5 5.4h0.8v1.0h-0.8zM354.4 10.3h1.4v1.0h-1.4zM387.3 0.0h1.4v0.8h-1.4zM580.0 20.7h1.0v1.0h-1.0zM508.4 23.0h1.4v0.5h-1.4zM278.5 7.5h0.8v0.5h-0.8zM411.1 17.6h1.4v1.0h-1.4zM554.7 6.6h0.5v0.8h-0.5zM595.8 10.0h0.8v1.0h-0.8zM523.3 19.6h1.4v0.8h-1.4zM443.0 16.0h0.6v0.8h-0.6zM500.4 20.0h0.6v0.8h-0.6zM531.4 1.0h1.4v1.0h-1.4zM356.7 12.9h1.4v0.6h-1.4zM455.3 5.9h0.5v0.6h-0.5zM390.4 9.7h0.6v0.8h-0.6zM313.4 16.2h0.8v0.8h-0.8zM348.5 5.7h1.0v0.8h-1.0zM312.0 15.1h1.4v0.8h-1.4zM312.1 16.7h1.0v1.0h-1.0zM349.5 14.9h0.5v1.0h-0.5zM413.7 22.2h1.4v0.6h-1.4zM474.4 10.9h0.8v0.6h-0.8zM305.5 6.8h0.8v0.8h-0.8zM337.5 1.4h0.8v0.8h-0.8zM334.3 16.6h0.8v0.5h-0.8zM321.8 10.5h1.0v0.8h-1.0zM366.5 13.2h0.5v0.5h-0.5zM429.0 23.1h0.8v0.5h-0.8zM526.3 7.8h1.4v1.0h-1.4zM357.8 15.2h0.8v0.8h-0.8zM331.7 12.8h0.5v0.8h-0.5zM586.4 15.2h1.4v1.0h-1.4zM591.9 15.4h0.8v0.6h-0.8zM292.8 17.6h0.5v0.8h-0.5zM558.5 7.0h0.6v1.0h-0.6zM560.7 21.9h0.6v0.5h-0.6zM539.3 19.6h1.4v1.0h-1.4zM379.5 4.4h0.8v0.8h-0.8zM345.8 3.2h0.8v0.8h-0.8zM349.0 1.0h1.0v0.8h-1.0zM581.4 22.3h0.8v0.8h-0.8zM439.8 3.7h0.8v1.0h-0.8zM468.3 1.9h1.4v0.6h-1.4zM322.6 10.5h0.8v0.5h-0.8zM607.2 20.1h0.8v0.6h-0.8zM341.7 8.8h0.5v1.0h-0.5zM564.0 18.6h0.8v0.6h-0.8zM364.4 15.6h1.0v0.8h-1.0zM576.3 1.5h0.5v0.6h-0.5zM581.0 3.9h0.8v0.5h-0.8zM420.2 13.3h0.8v1.0h-0.8zM333.7 2.0h0.8v1.0h-0.8zM426.2 22.9h1.4v0.6h-1.4zM605.6 22.7h1.0v0.5h-1.0zM548.6 1.4h1.4v0.8h-1.4zM478.1 7.0h1.0v0.8h-1.0zM598.0 11.3h1.4v0.6h-1.4zM370.0 8.1h1.4v0.5h-1.4zM561.5 5.3h1.4v0.8h-1.4zM506.8 3.5h1.0v0.8h-1.0zM459.2 22.3h0.8v1.0h-0.8zM349.3 10.4h0.8v0.5h-0.8zM344.8 22.9h0.6v1.0h-0.6zM527.2 5.2h0.8v0.5h-0.8zM331.0 15.8h1.4v0.8h-1.4zM344.7 10.8h1.0v1.0h-1.0zM508.7 17.4h1.0v1.0h-1.0zM293.5 9.6h0.5v0.8h-0.5zM312.4 11.9h1.0v0.5h-1.0zM484.2 22.7h1.0v0.5h-1.0zM426.0 16.2h1.0v0.6h-1.0zM603.3 4.5h0.8v0.5h-0.8zM313.2 18.3h0.5v0.8h-0.5zM348.2 8.8h0.5v1.0h-0.5zM599.0 10.8h0.5v0.6h-0.5zM414.2 21.0h1.0v0.6h-1.0zM462.0 21.7h0.8v0.6h-0.8zM393.6 19.9h1.4v0.5h-1.4zM553.6 2.9h0.8v1.0h-0.8zM522.8 22.4h1.4v0.8h-1.4zM280.7 14.2h0.5v0.8h-0.5zM457.0 19.0h0.5v0.5h-0.5zM588.4 15.9h0.8v0.8h-0.8zM332.9 10.5h1.0v0.8h-1.0zM305.1 0.5h0.5v0.5h-0.5zM544.9 4.4h1.0v0.8h-1.0zM570.4 15.8h0.6v1.0h-0.6zM571.0 12.7h1.4v0.8h-1.4zM596.6 0.3h0.8v0.6h-0.8zM435.5 11.4h0.5v0.5h-0.5zM291.5 14.6h1.4v1.0h-1.4zM402.5 11.2h0.6v0.8h-0.6zM402.8 20.6h1.0v1.0h-1.0zM292.0 7.8h0.6v0.8h-0.6zM577.5 13.9h0.5v0.6h-0.5zM324.7 8.5h0.8v0.8h-0.8zM466.9 9.2h0.8v0.8h-0.8zM267.6 13.7h0.8v0.6h-0.8zM272.7 10.8h1.0v0.5h-1.0zM485.7 17.2h0.6v0.8h-0.6zM399.7 1.5h0.8v0.8h-0.8zM464.1 12.5h0.6v0.5h-0.6zM584.9 21.3h0.5v0.6h-0.5zM535.7 14.9h1.4v0.5h-1.4zM392.2 6.6h0.6v0.6h-0.6zM503.3 7.2h0.8v0.8h-0.8zM443.1 15.0h0.8v1.0h-0.8zM515.3 7.9h1.4v0.8h-1.4zM499.9 20.9h0.8v1.0h-0.8zM393.7 5.7h0.6v0.8h-0.6zM318.1 4.8h1.4v0.8h-1.4zM406.8 9.3h0.8v0.6h-0.8zM470.3 3.4h1.4v0.8h-1.4zM353.5 13.5h1.4v0.8h-1.4zM291.2 4.5h0.5v1.0h-0.5zM327.9 13.7h0.8v0.8h-0.8zM604.2 16.3h1.4v0.5h-1.4zM558.2 7.5h0.6v0.8h-0.6zM578.8 12.9h0.6v0.8h-0.6zM348.2 0.5h0.5v0.8h-0.5zM421.8 21.1h0.8v1.0h-0.8zM491.7 4.6h1.4v0.5h-1.4zM601.6 14.2h0.5v0.5h-0.5zM548.0 20.7h0.8v0.6h-0.8zM267.3 6.4h1.4v0.5h-1.4zM488.8 21.8h0.6v0.8h-0.6zM379.5 17.7h1.4v0.8h-1.4zM407.0 16.0h0.8v0.6h-0.8zM285.5 9.8h0.5v0.5h-0.5zM484.1 7.9h0.8v1.0h-0.8zM404.9 22.2h0.5v0.5h-0.5zM588.4 13.3h0.8v0.5h-0.8zM410.4 16.8h0.8v0.6h-0.8zM298.1 3.7h0.6v1.0h-0.6zM533.2 2.1h0.8v0.8h-0.8zM385.6 16.1h1.0v0.6h-1.0zM494.9 14.2h0.8v0.6h-0.8zM524.1 6.1h1.4v0.8h-1.4zM531.9 18.3h0.8v1.0h-0.8zM606.6 10.7h0.8v0.8h-0.8zM448.1 22.2h0.6v0.8h-0.6zM268.7 11.2h1.4v0.8h-1.4zM318.1 14.8h0.8v0.5h-0.8zM592.5 14.7h0.5v0.5h-0.5zM455.1 4.8h0.6v0.8h-0.6zM593.5 8.6h0.6v0.6h-0.6zM569.4 20.2h0.6v1.0h-0.6zM275.6 18.4h0.6v0.8h-0.6zM608.3 11.8h1.4v0.8h-1.4zM580.0 9.2h0.6v0.8h-0.6zM541.1 0.6h1.4v0.5h-1.4zM288.3 15.2h0.8v0.8h-0.8zM286.4 13.3h0.8v0.8h-0.8zM595.3 14.8h0.6v0.5h-0.6zM353.4 6.2h0.8v0.6h-0.8zM346.3 4.8h0.8v0.8h-0.8zM369.7 23.5h0.6v1.0h-0.6zM541.5 11.3h0.8v0.6h-0.8zM552.7 6.7h0.8v0.5h-0.8zM435.0 21.0h0.6v0.8h-0.6zM503.8 14.1h0.8v0.6h-0.8zM467.6 20.8h0.6v0.8h-0.6zM281.6 18.3h0.8v0.6h-0.8zM417.2 3.3h0.8v0.5h-0.8zM546.5 3.6h0.5v0.6h-0.5zM583.7 3.6h1.4v0.8h-1.4zM299.5 4.0h1.4v0.8h-1.4zM297.0 8.0h1.4v0.8h-1.4zM573.3 23.1h0.5v1.0h-0.5zM347.4 18.7h1.4v0.5h-1.4zM278.7 11.9h0.6v1.0h-0.6zM415.7 2.5h0.5v0.5h-0.5zM611.3 7.5h0.5v0.5h-0.5zM599.6 22.9h1.0v0.8h-1.0zM266.4 5.3h1.0v0.6h-1.0zM486.5 12.9h0.5v1.0h-0.5zM388.9 11.7h0.5v0.8h-0.5zM604.2 20.1h0.6v0.5h-0.6zM360.8 4.2h0.8v0.8h-0.8zM289.6 1.0h1.0v0.5h-1.0zM407.9 13.1h0.8v0.8h-0.8zM269.2 16.2h1.4v0.8h-1.4zM455.3 13.0h1.4v0.8h-1.4zM608.3 20.6h1.4v0.8h-1.4zM404.8 7.5h0.8v0.8h-0.8zM605.1 9.1h0.8v0.8h-0.8zM546.0 21.2h1.4v0.5h-1.4zM348.9 11.8h0.8v1.0h-0.8zM520.3 23.4h0.6v0.5h-0.6zM295.8 14.7h0.5v0.5h-0.5zM407.1 13.2h1.4v0.8h-1.4zM457.1 7.4h1.0v0.5h-1.0zM430.7 15.3h0.8v1.0h-0.8zM385.0 12.9h0.8v0.6h-0.8zM553.4 18.7h0.8v0.8h-0.8zM514.0 9.3h1.0v0.8h-1.0zM479.4 16.0h0.8v0.5h-0.8zM485.0 12.8h0.6v1.0h-0.6zM532.6 6.2h0.8v0.8h-0.8zM447.7 11.2h0.6v0.6h-0.6zM288.5 17.9h0.8v1.0h-0.8zM337.0 4.0h0.8v0.6h-0.8zM500.6 3.6h1.4v0.8h-1.4zM327.5 22.4h1.4v0.5h-1.4zM377.9 8.5h0.8v0.5h-0.8zM408.6 16.6h0.8v0.5h-0.8zM392.8 15.6h1.0v1.0h-1.0zM371.0 15.6h0.8v0.8h-0.8zM366.9 10.5h0.5v0.8h-0.5zM487.0 17.2h0.6v1.0h-0.6zM317.8 16.1h0.8v0.8h-0.8zM447.2 5.6h0.8v1.0h-0.8zM384.2 9.0h0.5v1.0h-0.5zM335.6 13.5h0.5v1.0h-0.5zM327.8 16.9h0.8v0.8h-0.8zM354.7 6.3h0.8v0.5h-0.8zM448.8 11.6h0.5v0.6h-0.5zM310.3 22.6h0.8v1.0h-0.8zM538.1 21.7h1.4v0.8h-1.4zM396.6 1.0h0.8v0.8h-0.8zM415.9 14.3h0.8v0.8h-0.8zM348.8 20.1h0.6v1.0h-0.6zM332.4 22.9h1.4v1.0h-1.4zM395.5 15.7h0.8v0.5h-0.8zM293.4 10.5h0.8v1.0h-0.8zM410.2 22.1h1.4v0.5h-1.4zM303.1 13.3h0.8v0.8h-0.8zM410.3 11.2h0.5v0.8h-0.5zM404.3 3.2h0.5v0.6h-0.5zM523.9 9.5h0.5v0.8h-0.5zM458.8 18.2h0.8v0.5h-0.8zM296.9 20.0h1.0v0.5h-1.0zM301.0 2.1h0.6v1.0h-0.6zM424.0 19.4h0.6v0.8h-0.6zM434.0 1.3h1.4v0.8h-1.4zM559.9 3.3h0.8v0.5h-0.8zM569.8 3.4h0.8v0.6h-0.8zM446.4 0.1h1.0v0.8h-1.0zM447.0 2.0h0.8v0.8h-0.8zM497.2 7.1h0.8v1.0h-0.8zM574.6 16.1h0.8v0.8h-0.8zM352.2 9.0h0.8v1.0h-0.8zM355.2 4.8h0.5v0.6h-0.5zM452.9 8.8h0.8v0.8h-0.8zM513.2 3.3h0.8v0.6h-0.8zM424.8 16.7h1.4v0.5h-1.4zM520.0 0.2h0.5v0.8h-0.5zM597.5 19.4h0.5v0.8h-0.5zM342.2 10.4h0.6v0.6h-0.6zM545.6 14.0h0.8v0.8h-0.8zM591.8 10.5h0.6v0.5h-0.6zM328.4 20.3h0.5v0.5h-0.5zM313.3 20.8h1.0v0.8h-1.0zM328.4 21.8h1.0v0.6h-1.0zM439.4 15.9h1.4v0.8h-1.4zM545.4 12.6h0.6v0.6h-0.6zM536.9 16.9h1.0v0.5h-1.0zM428.0 4.8h0.5v0.5h-0.5zM410.2 15.5h0.8v0.8h-0.8zM504.9 3.7h0.5v0.6h-0.5zM280.1 19.7h0.8v0.6h-0.8zM570.8 18.8h1.4v1.0h-1.4zM516.6 7.3h0.8v0.8h-0.8zM457.0 5.1h1.4v0.6h-1.4zM402.1 0.8h0.8v0.6h-0.8zM489.1 5.3h1.0v0.5h-1.0zM334.7 3.5h0.6v0.8h-0.6zM381.8 9.5h0.5v0.8h-0.5zM308.1 21.8h1.4v1.0h-1.4zM449.2 6.9h0.8v0.5h-0.8zM527.4 11.7h0.5v0.6h-0.5zM434.7 20.4h1.0v1.0h-1.0zM454.2 2.1h0.6v0.8h-0.6zM360.1 21.1h0.6v1.0h-0.6zM588.2 0.8h1.0v0.5h-1.0zM603.1 8.1h0.6v0.8h-0.6zM283.0 7.9h0.8v0.8h-0.8zM351.8 17.5h0.6v0.5h-0.6zM540.4 7.0h0.5v1.0h-0.5zM424.3 17.6h0.5v0.6h-0.5zM473.4 10.9h0.5v0.5h-0.5zM444.7 2.3h1.4v0.6h-1.4zM410.4 19.8h0.5v0.8h-0.5zM519.4 17.3h0.8v0.6h-0.8zM496.8 2.1h0.5v0.8h-0.5zM371.4 6.2h0.5v0.6h-0.5zM306.4 11.7h1.0v1.0h-1.0zM306.5 11.0h0.6v1.0h-0.6zM452.4 12.0h0.8v0.6h-0.8zM364.4 13.1h0.6v0.6h-0.6zM519.1 12.6h0.6v0.5h-0.6zM270.8 22.3h0.8v1.0h-0.8zM339.1 17.6h0.5v0.6h-0.5zM319.1 6.2h0.5v0.8h-0.5zM402.8 12.2h0.8v1.0h-0.8zM576.3 2.0h1.0v0.6h-1.0zM347.1 14.0h1.0v0.5h-1.0zM552.2 1.7h0.8v0.5h-0.8zM279.9 14.6h1.4v0.6h-1.4zM549.8 8.1h0.8v1.0h-0.8zM586.9 0.3h0.8v0.8h-0.8zM276.8 18.6h0.6v1.0h-0.6zM502.4 3.6h0.8v0.6h-0.8zM336.6 21.8h1.4v0.8h-1.4zM512.8 1.6h0.5v0.8h-0.5zM278.7 12.4h0.8v0.5h-0.8zM527.8 15.0h0.6v0.5h-0.6zM560.7 18.6h0.5v0.8h-0.5zM468.9 19.0h0.8v0.8h-0.8zM312.6 19.6h0.8v0.5h-0.8zM525.5 19.6h1.4v1.0h-1.4zM323.0 9.1h1.4v1.0h-1.4zM369.8 22.7h1.0v0.5h-1.0zM289.2 18.5h0.8v0.6h-0.8zM349.3 13.9h1.0v0.6h-1.0zM571.8 13.6h1.4v0.5h-1.4zM402.3 18.5h1.4v0.8h-1.4zM553.7 9.6h0.5v0.6h-0.5zM493.2 19.7h0.8v1.0h-0.8zM581.0 10.1h0.8v0.5h-0.8zM370.4 14.3h0.5v0.8h-0.5zM411.6 14.3h0.8v0.6h-0.8zM382.6 5.0h0.8v0.8h-0.8zM560.2 14.6h0.8v0.8h-0.8zM296.2 6.4h1.4v0.8h-1.4zM407.7 12.7h0.6v0.5h-0.6zM341.0 14.8h0.8v0.6h-0.8zM401.5 7.9h0.6v0.8h-0.6zM323.9 8.3h1.0v0.8h-1.0zM373.2 7.5h1.0v1.0h-1.0zM331.6 19.6h0.6v0.8h-0.6zM449.5 0.0h0.6v0.5h-0.6zM595.3 10.7h1.4v0.8h-1.4zM522.6 16.0h1.0v1.0h-1.0zM498.0 3.2h0.8v0.8h-0.8zM292.0 14.7h0.8v0.8h-0.8zM599.8 8.5h1.4v0.8h-1.4zM592.8 19.1h0.5v0.8h-0.5zM437.7 16.3h0.5v0.5h-0.5zM571.0 21.0h0.5v1.0h-0.5zM397.1 7.3h1.0v0.6h-1.0zM519.9 17.7h0.5v0.8h-0.5zM433.9 0.2h0.8v0.6h-0.8zM331.0 21.7h1.0v0.5h-1.0zM613.7 4.1h1.0v0.8h-1.0zM484.4 5.7h1.0v0.5h-1.0zM412.3 23.1h1.4v0.5h-1.4zM546.4 16.0h0.8v0.8h-0.8zM601.6 16.7h1.4v0.8h-1.4zM378.6 19.7h0.8v0.5h-0.8zM542.5 8.2h0.6v0.6h-0.6zM445.6 20.7h0.6v0.8h-0.6zM523.2 4.0h0.8v0.5h-0.8zM470.5 22.9h0.8v0.6h-0.8zM360.5 21.0h0.8v0.6h-0.8zM482.1 21.9h0.8v0.5h-0.8zM503.4 8.5h0.8v0.8h-0.8zM542.4 11.2h0.5v0.6h-0.5zM588.6 14.7h1.0v0.8h-1.0zM487.9 18.4h0.8v0.5h-0.8zM318.6 17.9h0.8v1.0h-0.8zM561.5 9.7h0.5v0.8h-0.5zM402.2 16.9h0.8v1.0h-0.8zM548.5 20.1h0.5v0.8h-0.5zM422.4 0.3h1.0v1.0h-1.0zM372.1 14.2h0.8v0.8h-0.8zM607.7 20.9h1.0v0.5h-1.0zM528.6 16.0h0.8v0.5h-0.8zM590.1 3.9h0.6v0.5h-0.6zM535.8 9.3h1.4v0.8h-1.4zM405.1 11.8h0.8v0.8h-0.8zM567.4 16.8h0.6v1.0h-0.6zM522.2 9.8h0.8v0.6h-0.8zM339.9 16.1h0.8v0.5h-0.8zM440.7 20.1h1.4v0.6h-1.4zM467.2 9.5h1.0v0.8h-1.0zM539.5 16.0h0.6v0.6h-0.6zM343.0 20.1h0.6v1.0h-0.6zM309.1 6.7h0.5v0.8h-0.5zM572.2 3.1h1.4v0.8h-1.4zM479.2 6.5h0.5v1.0h-0.5zM476.6 12.0h1.0v0.6h-1.0zM581.0 7.3h0.8v1.0h-0.8zM605.7 18.9h0.8v0.5h-0.8zM509.6 1.7h0.8v0.6h-0.8zM266.7 14.9h0.6v0.8h-0.6zM361.5 1.4h0.8v1.0h-0.8zM459.2 19.1h0.5v1.0h-0.5zM554.3 2.6h0.6v0.8h-0.6zM485.2 8.0h0.8v1.0h-0.8zM463.9 5.1h0.6v0.8h-0.6zM558.5 19.1h1.0v0.5h-1.0zM343.3 4.1h1.0v0.8h-1.0zM413.4 1.5h1.4v0.8h-1.4zM518.4 13.8h0.8v0.8h-0.8zM444.2 13.9h0.6v0.5h-0.6zM546.2 22.7h0.8v0.8h-0.8zM290.4 11.3h0.6v0.8h-0.6zM423.9 16.1h1.4v1.0h-1.4zM424.2 8.1h0.6v0.5h-0.6zM406.1 6.7h0.6v0.5h-0.6zM522.4 12.2h0.8v0.6h-0.8zM541.3 17.5h0.8v0.6h-0.8zM461.0 16.5h0.8v0.5h-0.8zM586.6 17.1h1.4v0.5h-1.4zM287.4 4.9h0.5v1.0h-0.5zM357.6 8.4h0.6v1.0h-0.6zM486.1 23.4h0.8v0.5h-0.8zM280.9 4.1h0.8v0.8h-0.8zM579.2 19.0h0.8v0.5h-0.8zM385.2 20.3h0.8v0.8h-0.8zM435.1 2.0h0.8v0.8h-0.8zM431.7 19.4h0.6v0.5h-0.6zM449.9 5.9h0.8v0.6h-0.8zM389.0 15.5h0.6v0.8h-0.6zM595.4 23.1h0.8v0.8h-0.8zM321.7 21.2h0.8v0.6h-0.8zM313.8 2.6h1.4v1.0h-1.4zM450.9 0.7h0.5v0.8h-0.5zM537.8 4.8h1.0v1.0h-1.0zM584.4 20.3h0.8v1.0h-0.8zM460.8 10.9h1.4v0.6h-1.4zM268.1 4.8h0.8v0.8h-0.8zM572.8 2.3h0.6v0.6h-0.6zM419.1 13.5h1.4v0.8h-1.4zM531.3 13.5h1.4v0.5h-1.4zM566.2 4.0h1.4v0.6h-1.4zM515.7 11.1h0.8v1.0h-0.8zM315.0 21.5h1.0v0.8h-1.0zM287.4 5.6h0.6v0.5h-0.6zM402.4 18.6h0.6v0.5h-0.6zM350.2 21.4h0.6v0.5h-0.6zM278.8 1.1h0.6v0.6h-0.6zM536.1 1.0h1.0v1.0h-1.0zM586.3 6.2h0.6v0.8h-0.6zM271.9 17.9h0.5v0.5h-0.5zM330.7 19.0h0.6v1.0h-0.6zM444.2 2.5h0.8v0.5h-0.8zM290.7 0.7h1.4v0.5h-1.4zM440.9 14.6h1.0v1.0h-1.0zM292.6 1.3h1.0v1.0h-1.0zM367.0 9.4h0.5v1.0h-0.5zM525.5 0.6h1.0v0.8h-1.0zM338.4 16.7h1.4v0.6h-1.4zM499.9 23.2h1.0v0.5h-1.0zM456.1 8.3h0.5v0.5h-0.5zM520.3 20.1h0.5v0.5h-0.5zM393.8 7.1h0.8v0.6h-0.8zM438.0 13.6h0.8v0.6h-0.8zM267.9 1.8h0.5v1.0h-0.5zM340.1 9.1h0.8v1.0h-0.8zM466.0 5.0h1.4v0.5h-1.4zM584.1 19.8h1.4v0.5h-1.4zM499.4 3.2h0.8v0.5h-0.8zM328.3 22.2h0.8v0.8h-0.8zM512.1 6.0h0.8v0.8h-0.8zM275.4 9.0h0.6v0.8h-0.6zM322.4 22.3h1.4v0.8h-1.4zM531.6 19.7h0.8v0.8h-0.8zM546.0 0.3h1.0v0.5h-1.0zM384.4 12.8h0.8v0.8h-0.8zM266.1 18.2h0.6v0.8h-0.6zM542.8 12.6h0.5v0.5h-0.5zM553.6 7.4h1.4v0.8h-1.4zM393.6 12.7h0.8v0.6h-0.8zM339.3 1.3h1.4v1.0h-1.4zM351.0 21.6h1.0v0.5h-1.0zM491.6 5.1h0.5v0.8h-0.5zM416.1 2.8h0.6v1.0h-0.6zM418.4 16.2h1.4v0.8h-1.4zM528.3 5.9h0.8v0.5h-0.8zM297.5 20.4h1.4v0.8h-1.4zM481.3 15.5h1.4v1.0h-1.4zM315.1 1.6h0.5v0.8h-0.5zM371.6 1.5h0.5v1.0h-0.5zM270.6 8.5h0.6v1.0h-0.6zM304.9 11.7h1.0v0.8h-1.0zM586.8 10.6h0.5v0.8h-0.5zM371.3 9.7h1.4v0.6h-1.4zM420.8 17.2h0.5v0.8h-0.5zM385.0 19.6h0.5v0.8h-0.5zM554.7 5.3h0.6v0.8h-0.6zM499.6 6.6h0.5v0.6h-0.5zM290.9 2.1h1.4v1.0h-1.4zM374.4 6.2h0.5v0.6h-0.5zM433.5 19.8h0.5v0.8h-0.5zM354.1 2.1h1.0v0.6h-1.0zM287.2 7.0h0.8v0.6h-0.8zM592.2 8.4h1.0v0.6h-1.0zM313.8 18.6h0.8v0.8h-0.8zM393.3 12.3h0.5v0.6h-0.5zM582.8 3.9h0.8v0.5h-0.8zM343.7 4.6h0.6v0.8h-0.6zM563.2 5.7h0.8v0.8h-0.8zM569.0 1.2h1.4v0.8h-1.4zM557.4 5.5h0.5v0.8h-0.5zM418.5 2.7h0.8v1.0h-0.8zM513.8 2.2h0.5v0.8h-0.5zM432.9 4.1h0.6v0.8h-0.6zM419.2 2.8h0.5v0.8h-0.5zM391.5 11.1h0.8v1.0h-0.8zM285.5 12.0h0.8v0.6h-0.8zM461.9 20.5h0.8v0.5h-0.8zM286.4 10.2h0.5v0.6h-0.5zM447.5 12.0h0.8v0.6h-0.8zM300.9 11.3h0.8v0.8h-0.8zM539.5 3.1h0.8v0.8h-0.8zM299.7 6.6h0.8v0.5h-0.8zM307.3 23.2h0.8v0.8h-0.8zM328.3 0.3h1.4v1.0h-1.4zM580.5 15.2h1.4v0.5h-1.4zM453.0 5.5h0.8v1.0h-0.8zM314.1 8.6h0.8v0.8h-0.8zM523.9 20.2h0.8v0.6h-0.8zM509.7 0.4h0.8v0.5h-0.8zM422.3 20.1h0.8v0.8h-0.8zM605.9 19.8h0.8v0.8h-0.8zM469.1 22.2h0.8v0.5h-0.8zM502.5 0.3h0.8v0.6h-0.8zM288.5 8.8h1.4v0.8h-1.4zM500.2 5.0h0.6v0.6h-0.6zM556.5 4.8h0.8v0.8h-0.8zM344.5 22.7h0.8v0.5h-0.8zM407.5 8.1h1.4v0.5h-1.4zM463.9 18.2h0.6v0.5h-0.6zM319.5 19.2h1.0v0.8h-1.0zM431.3 12.9h0.8v0.6h-0.8zM356.6 13.3h0.8v0.8h-0.8zM317.6 3.2h1.0v0.6h-1.0zM468.4 20.9h0.5v0.6h-0.5zM347.3 4.0h1.0v0.8h-1.0zM541.2 6.0h1.0v0.6h-1.0zM565.7 22.6h0.8v0.8h-0.8zM298.6 10.3h0.5v0.5h-0.5zM581.0 1.7h0.6v0.6h-0.6zM412.1 12.5h0.8v1.0h-0.8zM469.0 10.5h0.8v1.0h-0.8zM470.1 18.9h1.0v1.0h-1.0zM332.7 1.8h0.8v1.0h-0.8zM398.8 20.3h0.8v0.6h-0.8z" fill="#0a1a24" opacity="0.6"/>
<path d="M409.3 22.6h0.8v0.5h-0.8zM510.2 1.3h1.0v0.8h-1.0zM339.6 7.7h0.5v0.8h-0.5zM431.4 16.0h1.0v0.6h-1.0zM428.0 7.7h0.6v0.8h-0.6zM296.5 22.9h1.0v0.8h-1.0zM405.5 3.2h1.0v0.6h-1.0zM394.9 16.7h0.8v0.8h-0.8zM533.1 3.0h0.6v0.6h-0.6zM572.2 2.7h1.0v0.6h-1.0zM574.2 14.5h1.0v0.5h-1.0zM429.4 10.7h0.8v1.0h-0.8zM455.0 8.1h0.8v0.8h-0.8zM326.7 11.4h0.5v0.6h-0.5zM403.0 2.8h1.0v0.8h-1.0zM557.1 15.2h1.0v0.6h-1.0zM511.5 22.8h0.6v0.8h-0.6zM532.9 7.1h0.8v0.6h-0.8zM552.2 14.2h1.0v1.0h-1.0zM281.4 21.2h1.0v1.0h-1.0zM409.4 13.2h0.5v0.5h-0.5zM544.1 19.8h0.5v0.6h-0.5zM266.9 5.4h0.8v0.6h-0.8zM272.2 2.7h0.5v0.6h-0.5zM317.4 7.9h1.0v0.8h-1.0zM377.2 9.9h0.8v0.8h-0.8zM381.7 21.9h0.8v0.6h-0.8zM358.2 1.5h0.5v0.8h-0.5zM311.5 20.5h0.8v0.8h-0.8zM440.6 3.3h1.0v1.0h-1.0zM546.5 17.7h1.0v0.8h-1.0zM399.9 16.9h0.6v0.8h-0.6zM543.7 18.9h0.5v0.5h-0.5zM470.1 4.5h1.0v0.8h-1.0zM546.1 18.7h0.6v1.0h-0.6zM298.1 15.7h1.0v0.8h-1.0zM313.7 4.5h1.0v0.6h-1.0zM303.2 15.0h0.6v0.8h-0.6zM440.5 12.3h0.8v0.5h-0.8zM276.3 17.1h0.6v1.0h-0.6zM367.0 15.1h1.0v0.8h-1.0zM480.0 21.3h0.6v0.8h-0.6zM612.9 21.2h0.6v0.6h-0.6zM287.1 10.9h0.8v0.8h-0.8zM403.9 12.3h0.8v0.5h-0.8zM535.8 7.4h0.8v0.5h-0.8zM378.9 5.6h0.6v0.6h-0.6zM426.7 4.7h0.5v1.0h-0.5zM516.2 20.5h1.0v0.8h-1.0zM450.2 18.3h0.5v0.5h-0.5zM483.2 10.3h0.5v0.8h-0.5zM545.9 12.1h0.8v0.8h-0.8zM562.9 22.1h0.8v0.8h-0.8zM452.2 18.4h1.0v0.8h-1.0zM481.4 2.5h0.8v0.5h-0.8zM487.7 6.6h0.5v1.0h-0.5zM310.5 11.0h1.0v0.5h-1.0zM370.2 1.6h1.0v0.8h-1.0zM418.1 2.0h0.8v0.5h-0.8zM515.3 17.4h0.5v0.8h-0.5zM583.0 15.8h1.0v0.5h-1.0zM509.9 7.5h1.0v1.0h-1.0zM556.2 4.0h0.6v0.8h-0.6zM532.5 10.0h0.8v0.8h-0.8zM308.5 5.7h1.0v0.5h-1.0zM297.5 22.3h1.0v0.8h-1.0zM430.5 22.6h1.0v0.8h-1.0zM530.3 9.3h0.6v0.6h-0.6zM526.9 21.6h0.8v0.5h-0.8zM568.2 12.1h0.6v0.5h-0.6zM354.5 11.1h1.0v0.6h-1.0zM606.2 14.5h0.8v0.6h-0.8zM520.1 20.0h1.0v0.6h-1.0zM495.7 1.3h0.5v0.6h-0.5zM466.1 0.2h0.8v1.0h-0.8zM279.2 0.9h0.8v0.6h-0.8zM561.6 19.3h0.8v0.8h-0.8zM370.7 14.6h0.8v0.8h-0.8zM364.6 22.2h0.5v0.8h-0.5zM529.4 18.2h1.0v0.6h-1.0zM550.6 15.2h0.5v0.6h-0.5zM528.9 19.2h0.8v1.0h-0.8zM494.4 9.0h0.8v0.6h-0.8zM349.2 16.8h1.0v0.5h-1.0zM386.0 19.9h0.8v0.6h-0.8zM564.7 22.5h1.0v1.0h-1.0zM493.2 1.1h1.0v0.8h-1.0zM595.7 11.1h0.8v0.6h-0.8zM520.1 8.5h0.5v0.5h-0.5zM306.8 20.9h0.5v0.6h-0.5zM394.6 14.5h0.8v0.5h-0.8zM334.8 10.9h0.8v0.8h-0.8zM545.5 22.5h0.8v1.0h-0.8zM429.7 21.2h1.0v0.8h-1.0zM523.4 8.3h0.5v1.0h-0.5zM470.5 19.6h1.0v0.5h-1.0zM434.4 9.8h1.0v0.6h-1.0zM338.1 8.6h0.8v0.5h-0.8zM494.0 13.4h0.8v1.0h-0.8zM464.2 0.6h0.6v0.8h-0.6zM614.1 4.3h0.8v1.0h-0.8zM540.8 8.4h0.6v1.0h-0.6zM545.3 5.2h1.0v0.8h-1.0zM320.6 15.0h0.5v0.8h-0.5zM335.9 7.1h0.8v1.0h-0.8zM521.0 4.4h1.0v1.0h-1.0zM269.3 20.6h1.0v0.8h-1.0zM614.5 13.2h0.6v0.6h-0.6zM271.6 15.3h0.5v1.0h-0.5zM391.7 21.8h0.6v1.0h-0.6zM273.7 11.9h1.0v0.6h-1.0zM443.8 22.0h1.0v0.6h-1.0zM315.6 14.9h0.5v0.8h-0.5zM313.1 16.2h1.0v0.8h-1.0zM347.1 5.1h1.0v0.8h-1.0zM284.4 18.3h0.8v0.6h-0.8zM526.7 5.6h0.8v0.6h-0.8zM445.8 4.1h1.0v0.6h-1.0zM581.0 4.8h1.0v0.5h-1.0zM527.0 16.8h1.0v0.6h-1.0zM360.6 19.8h1.0v0.5h-1.0zM436.0 0.0h0.5v0.5h-0.5zM578.8 13.2h0.8v0.6h-0.8zM377.2 4.0h0.6v1.0h-0.6zM382.8 18.1h0.6v0.6h-0.6zM345.0 20.5h0.8v1.0h-0.8zM417.7 7.3h1.0v0.6h-1.0zM421.0 3.4h1.0v0.8h-1.0zM308.9 7.0h0.8v0.8h-0.8zM558.6 18.1h1.0v0.8h-1.0z" fill="#080808" opacity="0.9"/>
<path d="M665.2 6.5h1.0v0.6h-1.0zM665.2 12.0h1.0v0.6h-1.0zM658.3 8.3h0.8v0.5h-0.8zM663.2 8.4h0.8v0.8h-0.8zM661.7 16.3h0.8v0.6h-0.8zM665.0 19.7h1.0v0.5h-1.0zM652.7 18.5h0.8v0.8h-0.8zM666.3 16.8h1.4v0.8h-1.4zM679.1 14.6h0.6v1.0h-0.6zM670.4 17.6h0.5v0.6h-0.5zM669.7 16.0h0.8v0.8h-0.8zM668.6 16.0h0.8v0.6h-0.8zM667.4 9.5h0.6v0.8h-0.6zM654.8 21.2h0.5v1.0h-0.5zM660.9 11.3h0.8v0.8h-0.8zM662.0 21.1h0.8v1.0h-0.8zM666.9 21.9h1.4v0.8h-1.4zM654.9 6.0h1.0v1.0h-1.0zM667.9 20.2h0.5v0.8h-0.5zM674.7 1.6h1.4v1.0h-1.4zM651.8 21.0h0.8v0.8h-0.8zM656.1 16.3h0.5v0.5h-0.5zM657.1 1.4h0.6v0.6h-0.6zM660.5 5.2h0.8v0.8h-0.8zM655.0 22.9h0.5v0.6h-0.5zM667.5 21.8h0.5v0.6h-0.5zM664.1 4.6h1.4v0.8h-1.4zM676.4 9.1h0.5v0.6h-0.5zM668.8 23.1h0.5v0.5h-0.5zM653.1 2.9h0.5v0.8h-0.5zM672.0 14.9h0.5v0.8h-0.5zM656.2 4.3h1.0v0.8h-1.0zM671.0 22.9h0.8v0.5h-0.8zM679.9 10.3h0.8v0.8h-0.8zM658.8 5.5h0.5v0.6h-0.5zM656.3 21.1h0.8v0.5h-0.8zM664.4 14.7h0.5v0.8h-0.5zM667.4 20.9h0.5v0.8h-0.5zM664.2 0.5h1.4v0.8h-1.4zM670.6 12.1h0.6v0.5h-0.6zM678.0 13.2h0.6v0.8h-0.6zM656.6 9.0h1.4v0.5h-1.4zM666.0 21.8h1.4v1.0h-1.4zM678.7 19.9h0.8v0.8h-0.8zM672.0 4.5h0.8v0.8h-0.8zM661.2 11.3h1.0v1.0h-1.0zM656.2 21.1h0.6v0.8h-0.6zM680.3 5.0h1.4v1.0h-1.4zM675.3 23.4h1.4v0.8h-1.4zM660.7 17.9h0.8v1.0h-0.8zM661.3 13.5h1.0v0.8h-1.0zM679.1 20.3h0.5v0.8h-0.5zM678.5 17.9h0.6v0.8h-0.6zM673.6 13.5h0.8v1.0h-0.8zM666.2 16.6h0.5v0.5h-0.5zM668.6 3.2h0.8v0.8h-0.8zM676.9 14.3h0.8v0.8h-0.8zM677.1 19.1h0.5v0.8h-0.5zM670.3 2.3h0.8v0.8h-0.8zM657.7 15.4h0.8v0.8h-0.8zM657.5 12.0h1.0v1.0h-1.0zM663.9 13.5h1.4v0.8h-1.4zM664.7 20.4h0.8v0.8h-0.8zM679.3 1.1h0.6v0.8h-0.6zM653.1 23.3h1.0v0.6h-1.0zM661.7 20.1h0.6v0.8h-0.6zM675.1 0.8h0.8v0.5h-0.8zM654.0 20.1h0.5v0.6h-0.5zM665.0 11.1h1.4v0.5h-1.4zM672.6 8.1h1.0v0.6h-1.0zM679.2 15.2h0.5v0.6h-0.5zM675.8 6.1h0.6v0.6h-0.6zM677.8 5.3h0.6v0.8h-0.6zM659.0 1.4h0.6v1.0h-0.6zM660.3 23.4h0.5v0.8h-0.5zM667.0 20.2h0.8v0.6h-0.8zM654.4 21.6h0.8v0.5h-0.8zM673.1 5.5h0.8v0.8h-0.8zM675.4 22.7h0.8v0.6h-0.8zM666.6 2.8h0.8v0.8h-0.8zM677.3 21.6h0.8v0.8h-0.8zM665.8 6.3h0.8v0.5h-0.8zM667.6 18.0h1.0v0.8h-1.0zM656.2 20.9h0.8v0.8h-0.8zM679.3 23.2h0.6v0.8h-0.6zM668.4 22.8h0.8v1.0h-0.8zM667.4 7.4h0.5v0.8h-0.5zM657.4 2.9h0.8v0.8h-0.8zM669.8 13.3h1.4v0.8h-1.4zM665.4 21.9h0.6v1.0h-0.6zM679.3 15.7h0.6v0.8h-0.6zM657.0 4.5h0.8v0.6h-0.8zM672.1 13.8h0.8v0.5h-0.8zM657.6 1.7h1.0v1.0h-1.0zM670.7 17.8h0.6v0.5h-0.6zM671.3 21.9h0.6v1.0h-0.6zM672.2 0.0h0.5v0.8h-0.5zM654.0 6.6h1.0v0.5h-1.0zM666.4 8.3h1.4v1.0h-1.4zM667.0 4.3h1.0v0.6h-1.0zM680.2 21.4h0.6v0.5h-0.6zM657.6 2.9h1.0v1.0h-1.0zM679.2 15.9h0.8v0.8h-0.8zM680.3 0.6h1.0v0.8h-1.0zM654.7 17.6h0.8v1.0h-0.8zM655.8 8.6h1.4v0.5h-1.4zM679.2 23.5h0.8v1.0h-0.8zM666.9 9.1h0.8v0.8h-0.8zM667.5 8.5h0.8v0.8h-0.8zM667.3 3.8h0.6v0.6h-0.6zM654.7 18.8h0.5v0.6h-0.5zM660.5 13.4h0.5v1.0h-0.5zM665.9 10.9h0.5v0.5h-0.5zM658.3 3.3h0.5v0.6h-0.5zM677.5 8.4h0.5v0.8h-0.5zM668.6 10.1h0.8v0.5h-0.8zM657.9 15.8h0.5v0.8h-0.5zM680.1 5.6h0.5v1.0h-0.5zM678.3 4.7h0.8v0.5h-0.8zM673.9 17.8h0.8v0.5h-0.8zM663.8 7.3h1.0v0.8h-1.0zM658.6 3.7h0.8v0.8h-0.8zM660.9 21.5h1.4v1.0h-1.4zM663.9 3.9h0.5v0.8h-0.5zM655.1 20.0h1.4v0.6h-1.4zM675.2 18.6h0.8v1.0h-0.8zM652.6 1.1h1.0v0.6h-1.0zM666.3 4.0h1.4v0.6h-1.4zM664.1 15.6h0.5v0.6h-0.5zM677.7 0.1h0.6v0.8h-0.6zM654.4 9.6h1.0v0.8h-1.0zM680.3 7.9h0.8v0.8h-0.8zM658.0 9.5h1.4v0.8h-1.4zM653.5 2.0h0.5v1.0h-0.5zM657.1 6.2h1.4v0.5h-1.4zM662.6 16.1h0.8v0.6h-0.8zM654.4 21.8h1.0v0.8h-1.0zM660.0 22.0h0.8v0.6h-0.8zM655.6 11.4h0.6v0.5h-0.6zM671.7 13.6h1.4v0.5h-1.4zM674.4 18.7h0.5v0.5h-0.5zM674.8 5.7h0.6v1.0h-0.6zM679.0 6.3h0.6v0.8h-0.6zM663.3 19.5h0.6v0.8h-0.6zM664.2 0.1h0.5v1.0h-0.5zM672.6 20.4h1.4v0.6h-1.4zM670.6 6.2h0.5v0.5h-0.5zM674.9 2.2h0.6v0.5h-0.6zM655.9 20.6h0.5v0.8h-0.5zM680.4 7.5h1.4v1.0h-1.4z" fill="#0a1a24" opacity="0.8"/>
<rect x="681.5" y="0" width="23.0" height="24.6" fill="#8a8a8a"/>
<path d="M700.5 13.9h2.5v1.0h-2.5zM693.2 7.3h0.6v0.8h-0.6zM697.5 3.0h0.8v1.0h-0.8zM693.8 23.4h1.0v0.8h-1.0zM696.0 3.0h0.5v0.8h-0.5zM691.0 14.1h0.5v1.0h-0.5zM687.9 2.8h2.5v0.8h-2.5zM698.7 12.2h0.6v1.0h-0.6zM693.4 12.8h0.8v0.8h-0.8zM699.8 0.8h0.8v0.8h-0.8zM688.6 16.1h2.5v0.8h-2.5zM700.5 16.7h0.8v0.8h-0.8zM683.4 8.5h2.5v0.6h-2.5zM699.7 23.2h0.8v0.8h-0.8zM695.5 16.4h0.8v1.0h-0.8zM682.8 8.5h0.5v0.8h-0.5zM702.7 12.4h2.5v0.8h-2.5zM699.2 5.4h0.8v0.8h-0.8zM683.9 18.8h2.5v0.6h-2.5zM692.2 8.7h0.8v0.8h-0.8zM682.5 3.1h0.8v0.8h-0.8zM700.6 10.4h0.8v0.6h-0.8zM688.4 23.0h0.6v0.6h-0.6zM689.2 1.4h2.5v0.6h-2.5zM688.8 20.1h0.5v0.8h-0.5zM690.8 3.6h0.8v1.0h-0.8zM684.1 21.3h0.8v1.0h-0.8zM690.2 14.0h0.8v0.5h-0.8zM690.1 4.4h0.5v0.8h-0.5zM684.0 7.6h0.6v0.5h-0.6zM695.2 4.4h0.5v1.0h-0.5zM696.3 14.4h0.8v0.5h-0.8zM685.9 20.2h0.6v0.6h-0.6zM691.9 18.2h0.8v0.5h-0.8zM682.3 7.7h2.5v1.0h-2.5zM683.5 10.9h0.6v0.6h-0.6zM691.2 23.4h0.8v0.5h-0.8zM701.4 2.7h0.8v0.6h-0.8zM695.9 10.0h0.8v1.0h-0.8zM686.8 15.0h1.0v1.0h-1.0zM699.3 6.4h2.5v0.8h-2.5zM691.8 0.3h2.5v0.8h-2.5zM691.7 14.1h0.6v1.0h-0.6zM700.0 12.9h0.8v0.6h-0.8zM699.1 2.5h0.8v0.8h-0.8zM702.2 20.7h0.8v0.8h-0.8zM700.7 16.4h0.5v0.5h-0.5zM701.4 4.3h0.5v0.8h-0.5zM690.5 10.8h2.5v0.8h-2.5zM692.9 23.2h0.6v0.5h-0.6zM692.7 11.7h0.8v0.8h-0.8zM700.4 4.9h0.8v0.8h-0.8zM700.2 14.2h1.0v1.0h-1.0zM687.5 18.0h1.0v0.8h-1.0zM700.1 8.6h1.0v0.8h-1.0zM684.5 15.9h0.5v0.8h-0.5zM685.1 0.5h0.8v0.6h-0.8zM690.3 3.8h2.5v0.6h-2.5zM696.1 10.5h0.8v0.8h-0.8zM686.6 18.6h0.8v0.6h-0.8zM699.8 8.8h2.5v0.5h-2.5zM682.1 5.2h0.8v0.8h-0.8zM696.4 11.7h0.8v0.6h-0.8zM693.4 1.6h0.6v0.6h-0.6zM687.2 15.2h0.6v1.0h-0.6zM698.4 15.5h0.8v0.8h-0.8zM693.6 3.2h0.8v1.0h-0.8zM683.9 6.5h0.8v0.6h-0.8zM693.5 14.6h1.0v0.6h-1.0zM696.3 17.5h0.8v1.0h-0.8zM684.3 20.1h0.8v0.8h-0.8zM693.6 3.9h0.5v0.5h-0.5zM683.3 14.7h1.0v1.0h-1.0zM697.5 6.3h0.5v0.6h-0.5zM701.4 22.4h0.5v0.5h-0.5zM695.1 5.4h0.5v0.8h-0.5zM693.2 20.4h0.6v0.8h-0.6zM701.3 8.0h0.5v0.6h-0.5zM688.9 1.6h0.5v0.5h-0.5zM695.2 2.9h0.6v0.8h-0.6zM696.3 7.1h2.5v0.5h-2.5zM700.6 23.4h0.8v1.0h-0.8zM699.0 6.6h0.5v0.5h-0.5zM697.6 5.4h0.5v1.0h-0.5zM692.1 14.2h0.6v0.8h-0.6zM696.9 11.0h0.8v0.6h-0.8zM702.2 5.2h0.8v1.0h-0.8zM687.0 16.4h0.8v0.5h-0.8zM686.4 5.1h0.8v0.8h-0.8zM692.7 11.8h0.5v1.0h-0.5zM698.1 17.6h2.5v0.8h-2.5zM690.3 3.8h0.8v0.8h-0.8zM684.9 18.0h0.8v0.6h-0.8zM691.9 12.0h0.6v0.6h-0.6zM689.3 19.2h0.5v0.8h-0.5zM687.6 15.0h0.8v0.8h-0.8zM689.8 13.7h0.6v0.8h-0.6zM691.1 0.0h0.8v0.8h-0.8zM698.9 3.3h1.0v1.0h-1.0zM693.9 21.2h2.5v0.6h-2.5zM687.9 20.4h2.5v0.8h-2.5zM699.4 10.3h2.5v0.8h-2.5zM685.7 2.4h0.8v0.6h-0.8zM692.7 3.5h0.6v0.8h-0.6zM690.0 3.5h0.6v1.0h-0.6zM700.0 3.8h1.0v1.0h-1.0zM685.7 15.2h0.8v0.5h-0.8zM681.9 21.9h0.6v0.8h-0.6zM682.3 18.1h1.0v0.5h-1.0zM693.3 5.1h0.8v1.0h-0.8zM686.5 13.5h2.5v0.8h-2.5zM689.7 11.3h0.5v0.6h-0.5zM696.7 3.6h1.0v0.5h-1.0zM682.8 13.5h0.5v0.6h-0.5zM687.0 2.0h0.8v0.5h-0.8z" fill="#101010" opacity="0.9"/>
<rect x="687.3" y="3.3" width="0.8" height="3.0" fill="#101010"/>
<rect x="701.7" y="4.0" width="0.8" height="4.7" fill="#101010"/>
<rect x="700.8" y="7.4" width="0.8" height="8.3" fill="#101010"/>
<rect x="700.5" y="2.1" width="0.8" height="8.2" fill="#101010"/>
<rect x="691.4" y="8.8" width="0.8" height="3.2" fill="#101010"/>
<rect x="686.5" y="6.3" width="0.8" height="5.2" fill="#101010"/>
<rect x="690.0" y="11.7" width="0.8" height="6.7" fill="#101010"/>
<rect x="756.4" y="0" width="15.0" height="24.6" fill="#8a8a8a"/>
<path d="M759.5 9.9h1.0v1.0h-1.0zM766.9 16.0h1.0v1.0h-1.0zM768.0 11.2h0.6v0.8h-0.6zM769.1 19.4h0.6v0.5h-0.6zM764.2 10.9h1.0v0.6h-1.0zM770.3 12.0h0.5v0.5h-0.5zM766.0 21.2h0.8v0.5h-0.8zM756.6 14.8h2.5v0.6h-2.5zM768.2 11.1h0.6v0.8h-0.6zM762.5 15.0h0.6v0.6h-0.6zM765.4 15.5h2.5v0.8h-2.5zM756.7 10.4h0.8v1.0h-0.8zM764.8 7.9h0.6v0.5h-0.6zM765.8 6.8h0.8v0.8h-0.8zM767.5 16.2h0.6v0.5h-0.6zM757.7 15.2h0.8v0.5h-0.8zM767.3 21.6h2.5v0.6h-2.5zM765.0 15.0h2.5v0.8h-2.5zM768.9 2.8h0.8v0.8h-0.8zM763.2 10.5h0.5v0.8h-0.5zM769.4 9.0h0.6v0.8h-0.6zM763.1 16.8h0.8v0.8h-0.8zM763.7 13.1h0.5v1.0h-0.5zM757.0 10.6h0.6v0.6h-0.6zM762.6 18.0h0.8v0.8h-0.8zM758.5 12.3h0.8v0.6h-0.8zM769.5 21.2h0.6v0.5h-0.6zM764.3 9.8h0.5v1.0h-0.5zM762.6 21.6h0.8v1.0h-0.8zM762.6 18.0h0.5v0.5h-0.5zM762.1 11.9h0.5v0.8h-0.5zM761.5 18.8h0.5v0.5h-0.5zM756.8 11.9h2.5v0.5h-2.5zM767.8 13.0h1.0v1.0h-1.0zM757.4 6.8h0.8v0.8h-0.8zM759.9 5.7h0.5v1.0h-0.5zM766.8 2.3h2.5v0.8h-2.5zM760.7 1.4h0.5v0.5h-0.5zM762.4 13.5h0.6v1.0h-0.6zM768.1 20.4h2.5v0.8h-2.5zM760.5 13.6h0.5v0.8h-0.5zM762.8 7.7h1.0v0.8h-1.0zM765.3 12.0h0.5v1.0h-0.5zM763.3 5.4h0.5v0.8h-0.5zM763.5 11.9h2.5v0.8h-2.5zM761.6 9.7h1.0v0.8h-1.0zM764.7 14.1h0.6v0.8h-0.6zM769.6 6.1h1.0v0.6h-1.0zM758.3 12.9h0.6v1.0h-0.6zM756.6 6.1h2.5v0.6h-2.5zM761.4 16.3h0.6v0.8h-0.6zM762.9 16.8h0.5v0.8h-0.5zM765.6 2.5h0.8v1.0h-0.8zM766.0 1.0h0.6v0.8h-0.6zM761.9 10.0h0.8v1.0h-0.8zM766.8 15.3h0.8v1.0h-0.8zM762.0 9.3h0.8v0.6h-0.8zM769.9 18.3h1.0v0.8h-1.0zM756.9 1.9h2.5v0.5h-2.5zM766.4 22.2h0.8v0.8h-0.8zM768.9 10.8h0.8v0.8h-0.8zM764.8 23.2h0.6v1.0h-0.6zM765.8 4.0h0.6v1.0h-0.6zM763.8 11.3h0.5v1.0h-0.5zM758.6 16.9h0.6v0.8h-0.6zM770.0 6.8h0.5v0.8h-0.5zM759.3 21.7h0.8v0.6h-0.8zM761.7 0.3h2.5v0.8h-2.5zM767.4 2.2h0.6v0.8h-0.6zM759.9 0.6h0.5v0.8h-0.5zM766.3 13.7h1.0v0.5h-1.0zM759.8 6.8h0.5v0.8h-0.5zM764.4 0.8h0.5v1.0h-0.5zM756.7 16.8h2.5v0.8h-2.5zM764.1 19.2h0.6v1.0h-0.6z" fill="#101010" opacity="0.9"/>
<rect x="762.9" y="6.2" width="0.8" height="4.1" fill="#101010"/>
<rect x="757.7" y="17.7" width="0.8" height="8.5" fill="#101010"/>
<rect x="765.7" y="6.0" width="0.8" height="6.0" fill="#101010"/>
<rect x="759.1" y="5.2" width="0.8" height="7.8" fill="#101010"/>
<rect x="757.1" y="9.0" width="0.8" height="6.5" fill="#101010"/>
<rect x="797.9" y="0" width="7.6" height="24.6" fill="#8a8a8a"/>
<path d="M798.2 6.0h2.5v0.8h-2.5zM802.3 22.1h1.0v0.8h-1.0zM800.9 11.0h1.0v0.8h-1.0zM804.0 16.3h0.6v0.5h-0.6zM799.5 16.1h2.5v0.6h-2.5zM799.3 4.9h2.5v0.8h-2.5zM799.1 7.9h2.5v0.8h-2.5zM801.1 1.1h0.6v0.5h-0.6zM799.1 1.8h0.8v0.5h-0.8zM798.0 11.3h0.8v1.0h-0.8zM804.2 9.8h0.6v0.5h-0.6zM801.8 5.6h0.8v0.8h-0.8zM800.6 1.4h1.0v0.5h-1.0zM800.0 14.3h0.8v0.6h-0.8zM799.4 23.3h0.5v0.5h-0.5zM803.5 20.1h0.8v0.8h-0.8zM804.3 19.8h1.0v0.8h-1.0zM801.7 0.3h0.8v0.8h-0.8zM800.6 22.6h0.8v1.0h-0.8zM801.4 2.4h0.5v0.8h-0.5zM802.2 11.8h0.8v1.0h-0.8zM801.8 2.7h1.0v0.8h-1.0zM803.6 23.3h0.8v0.5h-0.8zM801.9 9.9h1.0v0.8h-1.0zM802.3 0.1h0.8v0.6h-0.8zM800.2 11.1h0.5v0.8h-0.5zM802.0 14.2h0.5v0.8h-0.5zM799.9 5.5h1.0v0.8h-1.0zM803.9 13.4h2.5v0.5h-2.5zM800.7 20.8h2.5v1.0h-2.5zM804.3 14.7h0.8v0.8h-0.8zM802.1 12.6h2.5v0.8h-2.5zM804.1 0.3h0.8v0.5h-0.8zM803.0 5.8h2.5v0.6h-2.5zM803.2 5.6h0.8v0.6h-0.8zM802.8 16.9h1.0v0.8h-1.0zM802.0 3.3h0.5v0.6h-0.5zM800.8 20.9h0.8v0.6h-0.8z" fill="#101010" opacity="0.9"/>
<rect x="803.2" y="3.1" width="0.8" height="6.9" fill="#101010"/>
<rect x="803.0" y="16.8" width="0.8" height="3.1" fill="#101010"/>
<rect x="855.3" y="11.8" width="0.7" height="2.8" fill="#9a9a9a" opacity="0.8"/>
<rect x="853.8" y="20.2" width="0.7" height="1.6" fill="#9a9a9a" opacity="0.8"/>
<rect x="859.2" y="22.3" width="0.7" height="0.8" fill="#9a9a9a" opacity="0.8"/>
<rect x="856.1" y="3.7" width="0.7" height="0.9" fill="#9a9a9a" opacity="0.8"/>
<rect x="855.8" y="16.8" width="0.7" height="2.0" fill="#9a9a9a" opacity="0.8"/>
<rect x="853.2" y="19.2" width="0.7" height="1.8" fill="#9a9a9a" opacity="0.8"/>
<rect x="853.5" y="19.7" width="0.7" height="2.6" fill="#9a9a9a" opacity="0.8"/>
<rect x="854.5" y="22.5" width="0.7" height="2.5" fill="#9a9a9a" opacity="0.8"/>
<rect x="854.7" y="0.0" width="0.7" height="2.7" fill="#9a9a9a" opacity="0.8"/>
<rect x="863.1" y="2.3" width="0.7" height="2.4" fill="#9a9a9a" opacity="0.8"/>
<rect x="862.3" y="15.2" width="0.7" height="2.6" fill="#9a9a9a" opacity="0.8"/>
<rect x="865.3" y="7.9" width="0.7" height="2.6" fill="#9a9a9a" opacity="0.8"/>
<rect x="864.4" y="7.5" width="0.7" height="2.2" fill="#9a9a9a" opacity="0.8"/>
<rect x="861.1" y="20.4" width="0.7" height="2.0" fill="#9a9a9a" opacity="0.8"/>
<rect x="855.4" y="6.0" width="0.7" height="1.9" fill="#9a9a9a" opacity="0.8"/>
<rect x="853.4" y="20.6" width="0.7" height="2.7" fill="#9a9a9a" opacity="0.8"/>
<rect x="854.9" y="16.7" width="0.7" height="2.2" fill="#9a9a9a" opacity="0.8"/>
<rect x="853.2" y="18.7" width="0.7" height="2.4" fill="#9a9a9a" opacity="0.8"/>
<rect x="855.8" y="2.4" width="0.7" height="1.3" fill="#9a9a9a" opacity="0.8"/>
<rect x="862.3" y="11.2" width="0.7" height="2.6" fill="#9a9a9a" opacity="0.8"/>
<rect x="853.7" y="2.6" width="0.7" height="1.4" fill="#9a9a9a" opacity="0.8"/>
<rect x="863.8" y="3.9" width="0.7" height="0.8" fill="#9a9a9a" opacity="0.8"/>
<rect x="862.0" y="2.2" width="0.7" height="2.2" fill="#9a9a9a" opacity="0.8"/>
<rect x="852.7" y="5.9" width="0.7" height="2.2" fill="#9a9a9a" opacity="0.8"/>
<rect x="863.7" y="9.8" width="0.7" height="1.7" fill="#9a9a9a" opacity="0.8"/>
<rect x="851.9" y="8.2" width="0.7" height="1.2" fill="#9a9a9a" opacity="0.8"/>
<rect x="864.8" y="4.5" width="1.7" height="9" fill="#e8a850"/>
</svg>
 <div class="side">
  <svg style="left:0;top:0" width="24.2" height="489" viewBox="0 0 24.2 489" fill="none" stroke="#5e5e5e" stroke-width="0.9" stroke-linejoin="round">
   <path d="M6 9.1 H14.2 L18.6 13.9 V24 H6 Z M14.2 9.1 V13.9 H18.6"/>
   <text x="8.7" y="22.6" font-family="Liberation Sans, sans-serif" font-size="10.5" fill="#636363" stroke="none">#</text>
   <g transform="translate(-0.6 0)"><path d="M10.6 33.1 H9.6 Q7 33.1 7 35.7 V38.2 Q7 40.7 4.2 40.7 Q7 40.7 7 43.2 V45.8 Q7 48.3 9.6 48.3 H10.6"/>
   <path d="M13.8 33.1 H14.8 Q17.4 33.1 17.4 35.7 V38.2 Q17.4 40.7 20.2 40.7 Q17.4 40.7 17.4 43.2 V45.8 Q17.4 48.3 14.8 48.3 H13.8"/>
   <path d="M9.8 40.7 h1 M11.7 40.7 h1 M13.6 40.7 h1" stroke-width="1"/></g>
   <text x="4.8" y="71.4" font-family="Liberation Serif, serif" font-style="italic" font-size="32" fill="#5e5e5e" stroke="none">x</text>
   <text x="3.0" y="92.9" font-family="Liberation Serif, serif" font-weight="bold" font-size="19" fill="#636363" stroke="none">“</text>
   <text x="10.8" y="103.2" font-family="Liberation Serif, serif" font-weight="bold" font-size="19" fill="#636363" stroke="none">”</text>
   <path d="M9.6 87.6 h0.9 M11.4 87.6 h0.9 M13.2 87.6 h0.9" stroke-width="1.1"/>
   <path d="M4.5 111.7 L13 103.3 L18.4 103.1 Q20.7 103.1 20.7 105.6 L20.2 111 L12 118.9 Z"/><circle cx="15.7" cy="107.7" r="1.7"/>
   <g stroke-linejoin="miter" transform="translate(0 0.5)"><rect x="3.9" y="456.1" width="8" height="6.7"/><rect x="11.8" y="464.2" width="8.2" height="7.3"/>
   <path d="M11.9 458.6 H17.2 V462.4 M15.8 461.2 L17.2 462.7 L18.6 461.2 M11.8 469.3 H7 V465.2 M5.6 466.4 L7 464.9 L8.4 466.4"/></g>
  </svg>
  <svg style="left:6.3px;top:477.3px" width="8" height="9" viewBox="0 0 8 9"><path d="M3.9 0.1 L7.8 4.3 H5.5 V8.4 H2.3 V4.3 H0 Z" fill="#36b6f5"/></svg>
 </div>
 <div class="tabbar">
  <div class="nav" style="left:1.6px"><svg style="left:4.6px;top:4.1px" width="5" height="6" viewBox="0 0 5 6"><path d="M3.6 0.9 V5.1 L0.9 3Z" fill="#d0d0d0"/></svg></div>
  <div class="nav" style="left:17.6px"><svg style="left:5px;top:4.1px" width="5" height="6" viewBox="0 0 5 6"><path d="M1.2 0.9 V5.1 L3.9 3Z" fill="#d0d0d0"/></svg></div>
  <div class="tab"><span>multiple-styles.bndb (ELF Linear)</span>
   <svg style="left:124.6px;top:5.4px" width="8" height="8" viewBox="0 0 8 8" fill="none" stroke="#85827c" stroke-width="0.7"><rect x="0.5" y="0.5" width="6.6" height="6.2" stroke-dasharray="2.2 1.2"/><path d="M1.6 1.6 L6 5.6 M6 1.6 L1.6 5.6"/></svg>
  </div>
 </div>
 <div class="code">
  <div class="hlrow" style="top:245.94px"></div>
  <div class="vl" style="left:94.6px;top:0;height:410px;background:#484848"></div>
<div class="row" style="top:0.60px"><span class="addr">004009c2</span><span class="tx" style="left:119.60px"><span class="d">int64<i>_</i>t</span> <span class="v">rax</span> = *(<span class="v">fsbase</span> + <span class="n">0x28</span>)</span></div>
<div class="row" style="top:14.23px"><span class="addr">004009e7</span><span class="tx" style="left:119.60px"><span class="d">void</span> <span class="v">var<i>_</i>58</span></span></div>
<div class="row" style="top:27.86px"><span class="addr">004009e7</span><span class="tx" style="left:119.60px"><span class="y">struct</span> <span class="o">timespec</span>* <span class="v">r10</span> = <span class="b">read</span>(<span class="n">0</span>, &amp;<span class="v">var<i>_</i>58</span>, <span class="n">0x11</span>, <span class="v">arg4</span>, <span class="v">arg5</span>, <span class="v">arg6</span>)</span></div>
<div class="row" style="top:41.49px"><span class="addr">004009f6</span><span class="tx" style="left:119.60px"><span class="d">int64<i>_</i>t</span> <span class="v">var<i>_</i>38</span> = <span class="n">0x6f7573766e76796d</span></span></div>
<div class="row" style="top:55.12px"><span class="addr">00400a04</span><span class="tx" style="left:119.60px"><span class="d">int64<i>_</i>t var<i>_</i>30 = 0x6b6e797d73787377</span></span></div>
<div class="row" style="top:68.75px"><span class="addr">00400a08</span><span class="tx" style="left:119.60px"><span class="d">int16<i>_</i>t var<i>_</i>28 = 0x7d</span></span></div>
<div class="row" style="top:82.38px"><span class="addr">00400a0e</span><span class="tx" style="left:119.60px"><span class="d">int32<i>_</i>t</span> <span class="v">var<i>_</i>60</span> = <span class="n">0</span></span></div>
<div class="row" style="top:96.01px"><span class="addr">00400a58</span><span class="tx" style="left:119.60px"><span class="d">int64<i>_</i>t</span> <span class="v">rax<i>_</i>10</span></span></div>
<div class="row" style="top:109.64px"><span class="addr">00400a58</span><span class="tx" style="left:119.60px"><span class="y">int64<i>_</i>t</span> <span class="v">rbx<i>_</i>1</span></span></div>
<div class="row" style="top:123.27px"><span class="addr">00400a58</span><span class="tx" style="left:119.60px">while (<span class="v">true</span>)</span></div>
<div class="row" style="top:136.90px"><span class="addr">00400a58</span><span class="tx" style="left:144.44px"><span class="v">rbx<i>_</i>1</span> = sx.q(<span class="v">var<i>_</i>60</span>)</span></div>
<div class="row" style="top:150.53px"><span class="addr">00400a62</span><span class="tx" style="left:144.44px"><span class="y">uint64<i>_</i>t</span> <span class="v">rax<i>_</i>12</span></span></div>
<div class="row" style="top:164.16px"><span class="addr">00400a62</span><span class="tx" style="left:144.44px"><span class="d">int64<i>_</i>t</span> <span class="v">rcx</span></span></div>
<div class="row" style="top:177.79px"><span class="addr">00400a62</span><span class="tx" style="left:144.44px"><span class="d">int64<i>_</i>t</span> <span class="v">rdx</span></span></div>
<div class="row" style="top:191.42px"><span class="addr">00400a62</span><span class="tx" style="left:144.44px"><span class="d">int64<i>_</i>t</span> <span class="v">rsi<i>_</i>1</span></span></div>
<div class="row" style="top:205.05px"><span class="addr">00400a62</span><span class="tx" style="left:144.44px"><span class="d">int64<i>_</i>t</span> <span class="v">r8</span></span></div>
<div class="row" style="top:218.68px"><span class="addr">00400a62</span><span class="tx" style="left:144.44px"><span class="v">rax<i>_</i>12</span>, <span class="v">rcx</span>, <span class="v">rdx</span>, <span class="v">rsi<i>_</i>1</span>, <span class="v">r8</span> = <span class="b">strlen</span>(&amp;<span class="v">var<i>_</i>38</span>)</span></div>
<div class="row" style="top:232.31px"><span class="addr">00400a71</span><span class="tx" style="left:144.44px">if (<span class="v">rbx<i>_</i>1</span> u&gt;= <span class="v">rax<i>_</i>12</span>)</span></div>
<div class="row" style="top:245.94px"><span class="addr">00400a71</span><span class="tx" style="left:169.28px"><span class="hb"><i>_</i>IO<i>_</i>puts</span>(<span class="s">&quot;you got it!&quot;</span>, <span class="v">rsi<i>_</i>1</span>, <span class="v">rdx</span>, <span class="v">rcx</span>, <span class="v">r8</span>, <span class="v">arg6</span>, <span class="v">r10</span>)</span></div>
<div class="row" style="top:259.57px"><span class="addr">00400a76</span><span class="tx" style="left:169.28px"><span class="v">rax<i>_</i>10</span> = <span class="n">0</span></span></div>
<div class="row" style="top:273.20px"><span class="addr">00400a76</span><span class="tx" style="left:169.28px">break</span></div>
<div class="row" style="top:286.83px"><span class="addr">00400a45</span><span class="tx" style="left:144.44px">if (*(&amp;<span class="v">var<i>_</i>38</span> + sx.q(<span class="v">var<i>_</i>60</span>)) != *(&amp;<span class="v">var<i>_</i>58</span> + sx.q(<span class="v">var<i>_</i>60</span>)) + <span class="n">0xa</span>)</span></div>
<div class="row" style="top:300.46px"><span class="addr">00400a45</span><span class="tx" style="left:169.28px"><span class="hb"><i>_</i>IO<i>_</i>puts</span>(<span class="s">&quot;sounds fake but ok&quot;</span>, <span class="v">rsi<i>_</i>1</span>, <span class="v">rdx</span>, <span class="v">rcx</span>, <span class="v">r8</span>, <span class="v">arg6</span>, <span class="v">r10</span>)</span></div>
<div class="row" style="top:314.09px"><span class="addr">00400a4a</span><span class="tx" style="left:169.28px"><span class="v">rax<i>_</i>10</span> = <span class="n">1</span></span></div>
<div class="row" style="top:327.72px"><span class="addr">00400a4f</span><span class="tx" style="left:169.28px">break</span></div>
<div class="row" style="top:341.35px"><span class="addr">00400a51</span><span class="tx" style="left:144.44px"><span class="v">var<i>_</i>60</span> = <span class="v">var<i>_</i>60</span> + <span class="n">1</span></span></div>
<div class="row" style="top:354.98px"><span class="addr">00400a95</span><span class="tx" style="left:119.60px">if ((<span class="v">rax</span> ^ *(<span class="v">fsbase</span> + <span class="n">0x28</span>)) == <span class="n">0</span>)</span></div>
<div class="row" style="top:368.61px"><span class="addr">00400a95</span><span class="tx" style="left:144.44px">return <span class="v">rax<i>_</i>10</span></span></div>
<div class="row" style="top:382.24px"><span class="addr">00400a8a</span><span class="tx" style="left:119.60px"><span class="b"><i>_</i><i>_</i>stack<i>_</i>chk<i>_</i>fail</span>(<span class="v">rbx<i>_</i>1</span>, <span class="v">arg7</span>)</span></div>
<div class="row" style="top:395.87px"><span class="addr">00400a8a</span><span class="tx" style="left:119.60px">noreturn</span></div>
  <div class="vl" style="left:119.4px;top:136.9px;height:218.1px;background:#3d3d3d"></div>
  <div class="vl" style="left:119.4px;top:368.6px;height:13.6px;background:#3d3d3d"></div>
  <div class="vl" style="left:144.4px;top:245.9px;height:40.9px"></div>
  <div class="vl" style="left:144.4px;top:300.5px;height:40.9px"></div>
 </div>
 <div class="sep"></div>
 <div class="hex">
  <div class="hexbox" style="left:203px;width:18.6px"></div>
  <div class="hexbox" style="left:277.4px;width:18.4px"></div>
  <span class="addr" style="left:32.8px">00400a96</span>
  <span style="left:206.2px"><span style="position:static;color:#80c6e9">66</span> <span style="position:static;color:#b0dde4">2e-</span>0f 1f 84 00 00 00 00 00</span>
  <span style="left:436.4px"><span style="position:static;color:#80c6e9">f</span>.........</span>
 </div>
 <div class="vsb"><div class="thumb"></div><div class="sbtn" style="left:0;top:434px;width:9.5px;height:8px"></div>
  <svg style="left:2.2px;top:2.6px" width="6" height="4" viewBox="0 0 6 4"><path d="M0.2 3.6 L2.8 0.6 L5.4 3.6Z" fill="#aaa"/></svg>
  <svg style="left:2.2px;top:437px" width="6" height="4" viewBox="0 0 6 4"><path d="M0.2 0.4 L2.8 3.4 L5.4 0.4Z" fill="#aaa"/></svg>
 </div>
 <div class="hsb"><div class="thumb"></div><div class="sbtn" style="left:0;top:0;width:8px;height:8px;border-right:1px solid #484848"></div><div class="sbtn" style="left:825px;top:0;width:8.3px;height:8px"></div>
  <svg style="left:2.6px;top:2px" width="4" height="6" viewBox="0 0 4 6"><path d="M3.6 0.2 L0.6 2.8 L3.6 5.4Z" fill="#bbb"/></svg>
  <svg style="left:827px;top:2px" width="4" height="6" viewBox="0 0 4 6"><path d="M0.4 0.2 L3.4 2.8 L0.4 5.4Z" fill="#bbb"/></svg>
 </div>
 <div class="corner"></div>
 <div class="status">
  <svg style="left:552.8px;top:4.2px" width="9" height="9" viewBox="0 0 9 9"><circle cx="4.5" cy="4.5" r="4.2" fill="#e8232b"/><path d="M2.8 2.8 L6.2 6.2 M6.2 2.8 L2.8 6.2" stroke="#fff" stroke-width="1.2"/></svg>
  <span style="left:562.6px">1</span>
  <span style="left:586.4px">Selection: 0x400a71 to 0x400a76 (0x5 bytes)</span>
  <span style="left:755.3px;letter-spacing:-0.85px">ELF</span><svg style="left:769.2px;top:7.6px" width="3" height="3" viewBox="0 0 3 3"><path d="M0 0.4 H3 L1.5 2.6Z" fill="#ddd"/></svg>
  <span style="left:780.6px">Linear</span><svg style="left:804.2px;top:7.6px" width="3" height="3" viewBox="0 0 3 3"><path d="M0 0.4 H3 L1.5 2.6Z" fill="#ddd"/></svg>
  <span style="left:815.2px">Options</span><svg style="left:844.4px;top:7.6px" width="3" height="3" viewBox="0 0 3 3"><path d="M0 0.4 H3 L1.5 2.6Z" fill="#ddd"/></svg>
  <svg style="left:856.1px;top:5px" width="7.6" height="8.4" viewBox="0 0 10 11"><path d="M2.6 5 V3.4 Q2.6 1 5 1 Q7.4 1 7.4 3.4 V5" fill="none" stroke="#d8d8d0" stroke-width="1.2"/><rect x="0.8" y="4.8" width="8.4" height="5.6" rx="0.6" fill="#b5ac5a"/></svg>
 </div>
</div></div>
</body></html>
